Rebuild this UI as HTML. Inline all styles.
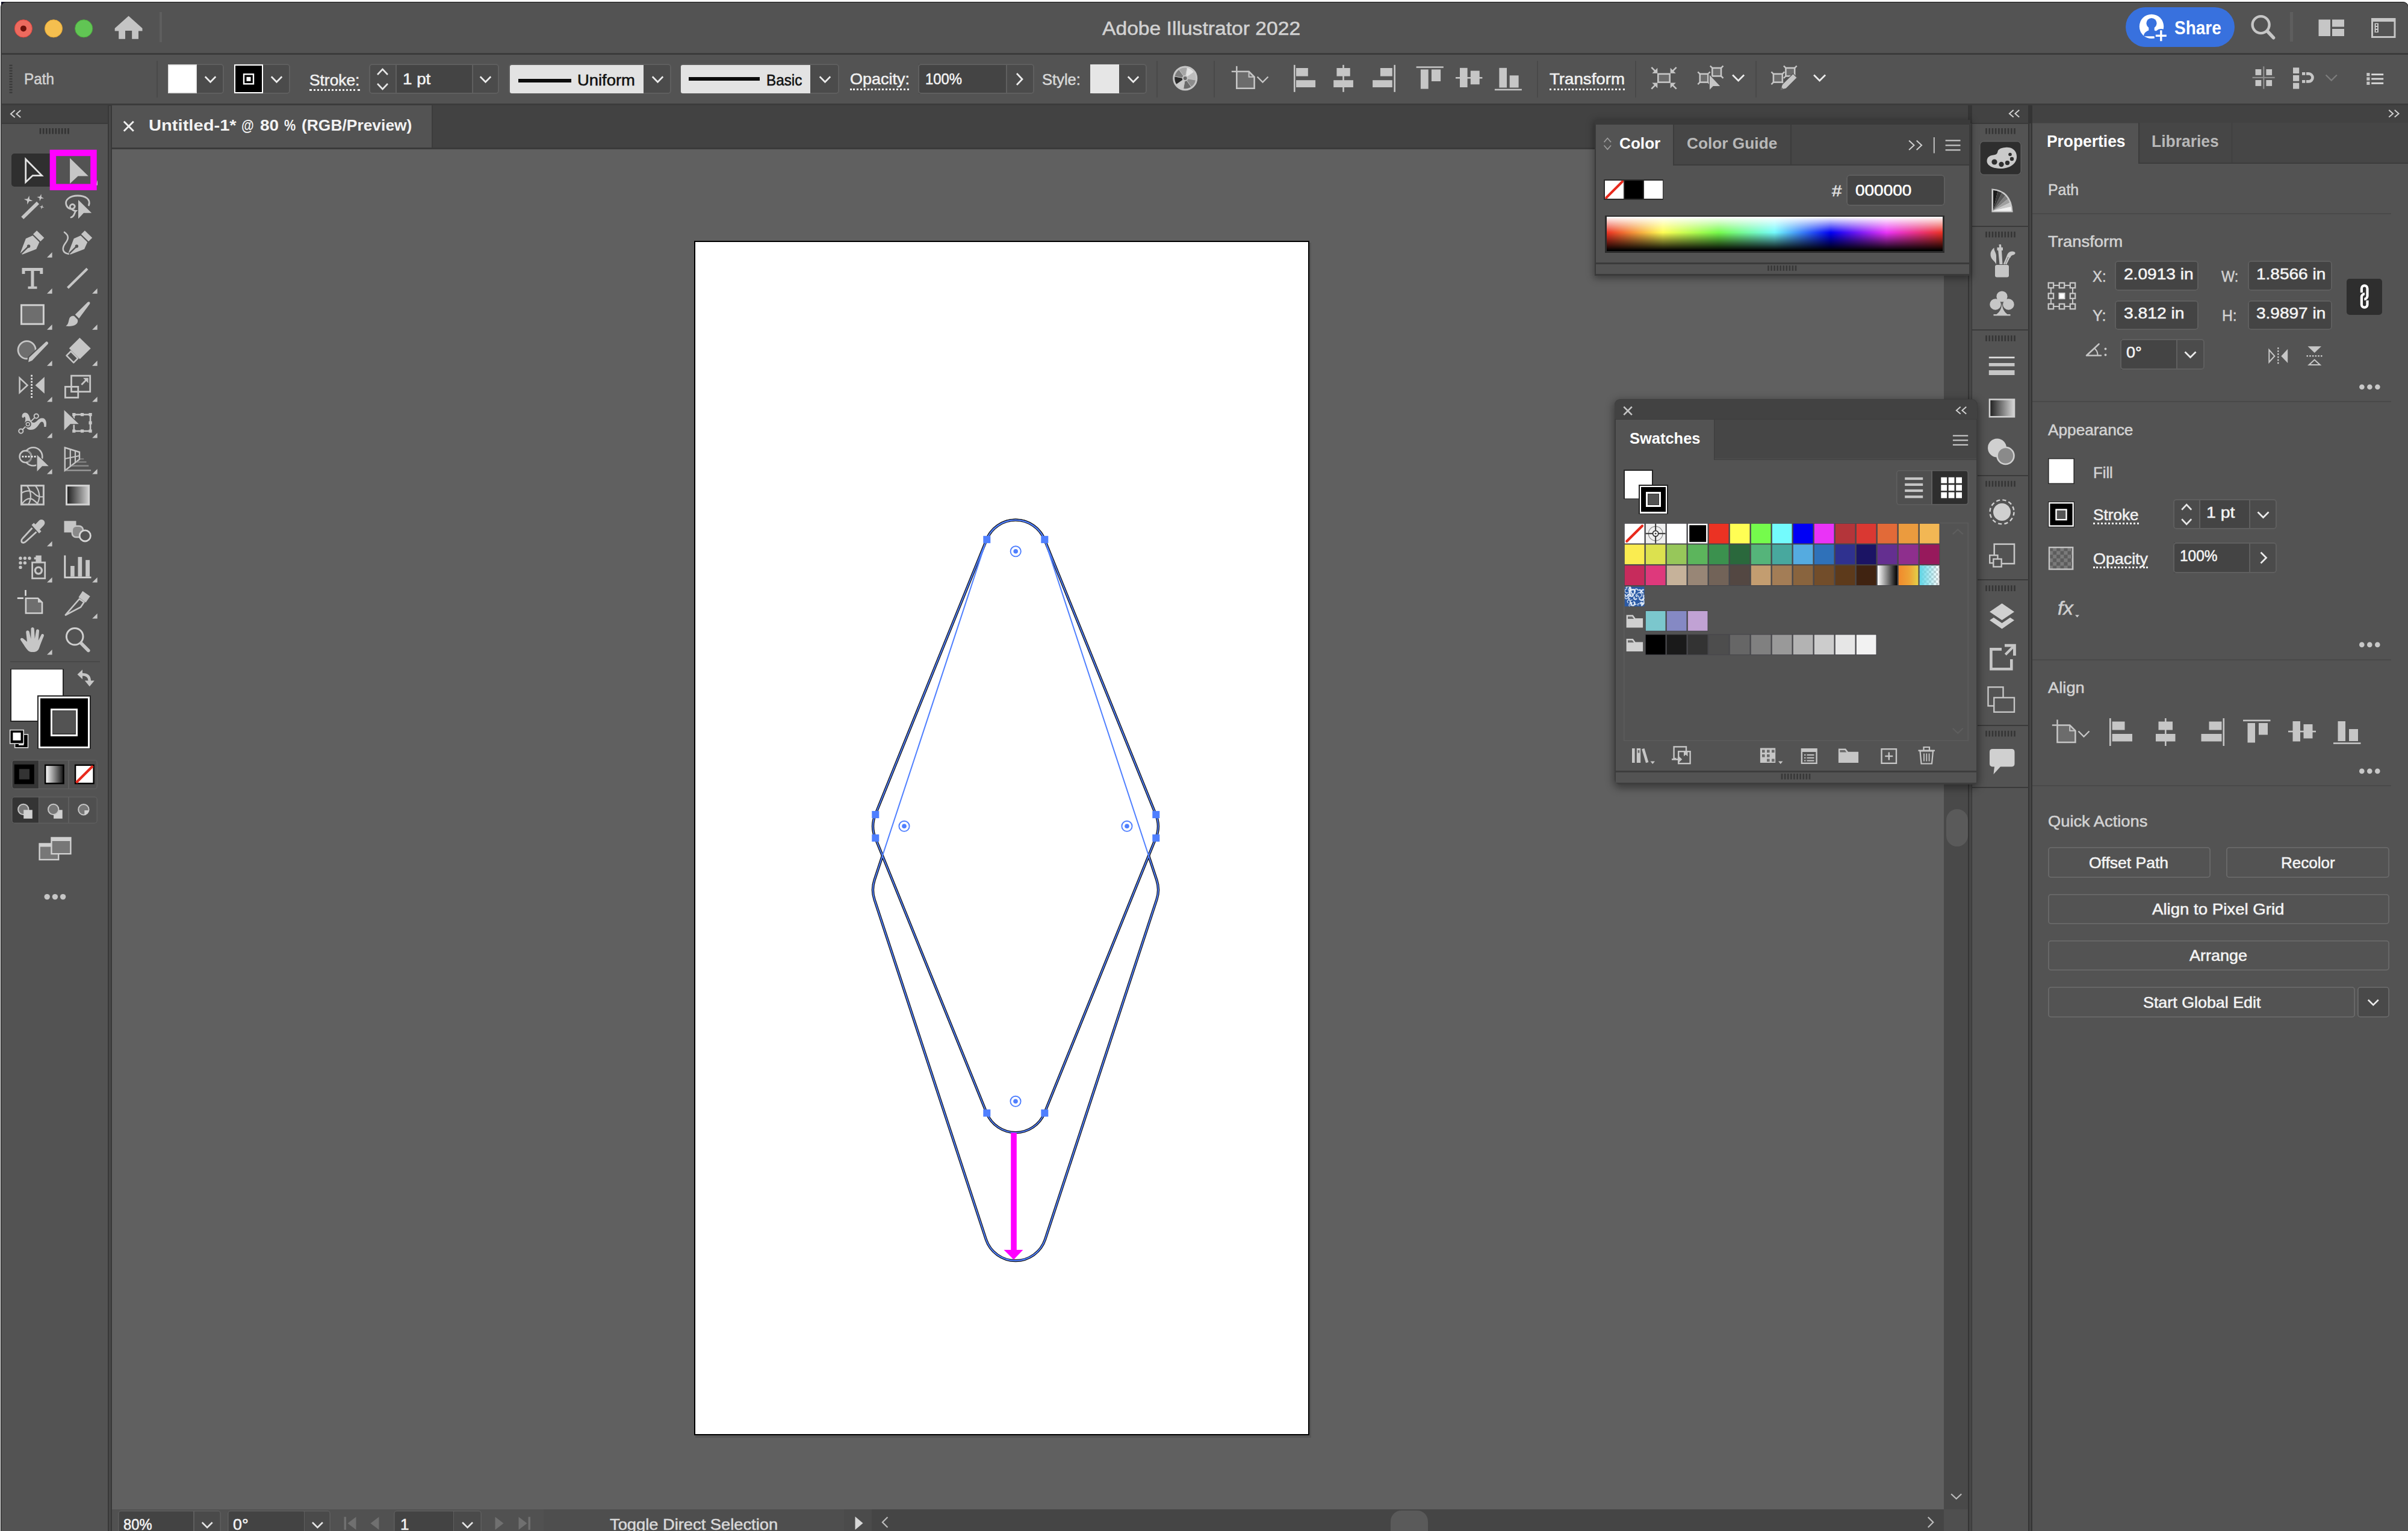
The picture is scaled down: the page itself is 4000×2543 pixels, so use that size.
<!DOCTYPE html>
<html><head><meta charset="utf-8"><title>Adobe Illustrator 2022</title>
<style>
html,body{margin:0;padding:0}
body{width:4000px;height:2543px;position:relative;overflow:hidden;background:#535353;font-family:"Liberation Sans",sans-serif}
#app div,#app span{position:absolute}
#app .t{white-space:nowrap;transform-origin:0 50%}
#ov{position:absolute;left:0;top:0}
</style></head><body>
<div id="app">
<div style="left:0px;top:0px;width:4000px;height:2543px;background:#ffffff;"></div>
<div style="left:1.75px;top:3px;width:12.25px;height:13px;background:#0d0b25;"></div>
<div style="left:1.3px;top:2.8px;width:3999.7px;height:2557.2px;background:#535353;border-radius:9px;border:1.8px solid #141414;box-sizing:border-box;"></div>
<div style="left:3px;top:88px;width:3997px;height:2.5px;background:#3b3b3b;"></div>
<div style="left:264.5px;top:19.5px;width:4px;height:50px;background:#5e5e5e;"></div>
<span class="t" style="left:1831.4px;top:30.91px;font-size:32px;line-height:32px;color:#d2d2d2;-webkit-text-stroke:0.55px #d2d2d2;transform:scaleX(1.0511);">Adobe Illustrator 2022</span>
<div style="left:3531.2px;top:12.3px;width:180.5px;height:65.8px;background:#3871de;border-radius:33px;"></div>
<span class="t" style="left:3612.4px;top:31.14px;font-size:31.5px;line-height:31.5px;color:#ffffff;font-weight:bold;transform:scaleX(0.8885);">Share</span>
<div style="left:3804.3px;top:20.4px;width:4.6px;height:48.9px;background:#5e5e5e;"></div>
<div style="left:3px;top:172px;width:3997px;height:2.5px;background:#3b3b3b;"></div>
<span class="t" style="left:40.2px;top:117.99px;font-size:26px;line-height:26px;color:#d0d0d0;-webkit-text-stroke:0.55px #d0d0d0;transform:scaleX(0.9346);">Path</span>
<div style="left:259.7px;top:101px;width:2px;height:60.5px;background:#494949;"></div>
<div style="left:278.7px;top:105.7px;width:93.3px;height:50.3px;background:#4b4b4b;border-radius:5px;"></div>
<div style="left:278.7px;top:105.7px;width:93.3px;height:50.3px;box-shadow:inset 0 0 0 2px #5f5f5f;border-radius:5px;"></div>
<div style="left:278.7px;top:107.4px;width:48.1px;height:47.9px;background:#ffffff;box-shadow:inset 0 0 0 1.5px #dcdcdc;"></div>
<div style="left:389px;top:105.7px;width:93px;height:50.3px;background:#4b4b4b;border-radius:5px;"></div>
<div style="left:389px;top:105.7px;width:93px;height:50.3px;box-shadow:inset 0 0 0 2px #5f5f5f;border-radius:5px;"></div>
<div style="left:389px;top:107.4px;width:48px;height:47.9px;background:#000000;box-shadow:inset 0 0 0 2px #ffffff;"></div>
<div style="left:514.2px;top:147.8px;width:83.4px;height:0;border-top:3px dotted #f0f0f0"></div>
<span class="t" style="left:514.2px;top:120.29px;font-size:26px;line-height:26px;color:#f0f0f0;-webkit-text-stroke:0.55px #f0f0f0;transform:scaleX(1.0124);">Stroke:</span>
<div style="left:613.4px;top:105.7px;width:215.6px;height:50.3px;background:#4b4b4b;border-radius:5px;"></div>
<div style="left:658.5px;top:105.7px;width:125px;height:50.3px;background:#444444;"></div>
<div style="left:656.5px;top:105.7px;width:2px;height:50.3px;background:#5f5f5f;"></div>
<div style="left:783.5px;top:105.7px;width:2px;height:50.3px;background:#5f5f5f;"></div>
<div style="left:613.4px;top:105.7px;width:215.6px;height:50.3px;box-shadow:inset 0 0 0 2px #5f5f5f;border-radius:5px;"></div>
<span class="t" style="left:668.7px;top:117.99px;font-size:26px;line-height:26px;color:#f2f2f2;-webkit-text-stroke:0.55px #f2f2f2;transform:scaleX(1.0674);">1 pt</span>
<div style="left:845px;top:105.7px;width:270px;height:50.3px;background:#4b4b4b;border-radius:5px;"></div>
<div style="left:845px;top:105.7px;width:270px;height:50.3px;box-shadow:inset 0 0 0 2px #5f5f5f;border-radius:5px;"></div>
<div style="left:846.6px;top:108px;width:222px;height:46.6px;background:#e3e3e3;border-radius:3px 0 0 3px;"></div>
<div style="left:861px;top:130.8px;width:87.5px;height:5.8px;background:#0c0c0c;"></div>
<span class="t" style="left:959.3px;top:120.39px;font-size:26px;line-height:26px;color:#111;-webkit-text-stroke:0.55px #111;transform:scaleX(1.0537);">Uniform</span>
<div style="left:1129.6px;top:105.7px;width:264.4px;height:50.3px;background:#4b4b4b;border-radius:5px;"></div>
<div style="left:1129.6px;top:105.7px;width:264.4px;height:50.3px;box-shadow:inset 0 0 0 2px #5f5f5f;border-radius:5px;"></div>
<div style="left:1131.2px;top:108px;width:214.8px;height:46.6px;background:#e3e3e3;border-radius:3px 0 0 3px;"></div>
<div style="left:1144px;top:128.4px;width:117.5px;height:6px;background:#0c0c0c;"></div>
<span class="t" style="left:1273.3px;top:120.39px;font-size:26px;line-height:26px;color:#111;-webkit-text-stroke:0.55px #111;transform:scaleX(0.9327);">Basic</span>
<div style="left:1411.6px;top:146.7px;width:98.9px;height:0;border-top:3px dotted #f0f0f0"></div>
<span class="t" style="left:1411.6px;top:118.49px;font-size:26px;line-height:26px;color:#f0f0f0;-webkit-text-stroke:0.55px #f0f0f0;transform:scaleX(1.0370);">Opacity:</span>
<div style="left:1525px;top:105.7px;width:192.5px;height:50.3px;background:#4b4b4b;border-radius:5px;"></div>
<div style="left:1526px;top:105.7px;width:145px;height:50.3px;background:#444444;"></div>
<div style="left:1671px;top:105.7px;width:2px;height:50.3px;background:#5f5f5f;"></div>
<div style="left:1525px;top:105.7px;width:192.5px;height:50.3px;box-shadow:inset 0 0 0 2px #5f5f5f;border-radius:5px;"></div>
<span class="t" style="left:1536.6px;top:117.99px;font-size:26px;line-height:26px;color:#f2f2f2;-webkit-text-stroke:0.55px #f2f2f2;transform:scaleX(0.9188);">100%</span>
<span class="t" style="left:1731.4px;top:119.49px;font-size:26px;line-height:26px;color:#d8d8d8;-webkit-text-stroke:0.55px #d8d8d8;transform:scaleX(0.9826);">Style:</span>
<div style="left:1811px;top:105.7px;width:94px;height:50.3px;background:#4b4b4b;border-radius:5px;"></div>
<div style="left:1811px;top:105.7px;width:94px;height:50.3px;box-shadow:inset 0 0 0 2px #5f5f5f;border-radius:5px;"></div>
<div style="left:1811px;top:107.4px;width:48.3px;height:47.9px;background:#e6e6e6;"></div>
<div style="left:1920.5px;top:101px;width:2px;height:60.5px;background:#494949;"></div>
<div style="left:2015.5px;top:101px;width:2px;height:60.5px;background:#494949;"></div>
<div style="left:2553px;top:101px;width:2px;height:60.5px;background:#494949;"></div>
<div style="left:2716px;top:101px;width:2px;height:60.5px;background:#494949;"></div>
<div style="left:2916px;top:101px;width:2px;height:60.5px;background:#494949;"></div>
<div style="left:2574.4px;top:146.7px;width:125px;height:0;border-top:3px dotted #f0f0f0"></div>
<span class="t" style="left:2574.4px;top:118.49px;font-size:26px;line-height:26px;color:#f0f0f0;-webkit-text-stroke:0.55px #f0f0f0;transform:scaleX(1.0638);">Transform</span>
<div style="left:2.5px;top:174.5px;width:177px;height:29.5px;background:#424242;"></div>
<div style="left:179.3px;top:174.5px;width:7px;height:2368.5px;background:#383838;"></div>
<div style="left:181.4px;top:176px;width:2.6px;height:2367px;background:#484848;"></div>
<div style="left:2.5px;top:204px;width:177px;height:1.5px;background:#3b3b3b;"></div>
<div style="left:19px;top:255px;width:71px;height:55px;background:#2f2f2f;border-radius:5px;"></div>
<div style="left:17px;top:1097.8px;width:149px;height:1.8px;background:#494949;"></div>
<div style="left:17.2px;top:1110.5px;width:88.9px;height:88.5px;background:#262626;"></div>
<div style="left:18.8px;top:1112px;width:85.6px;height:85.4px;background:#ffffff;"></div>
<div style="left:62px;top:1155.1px;width:89px;height:88.8px;background:#262626;"></div>
<div style="left:63.8px;top:1156.9px;width:85.7px;height:85.7px;background:#ffffff;"></div>
<div style="left:66.9px;top:1160px;width:79.4px;height:79.5px;background:#000000;"></div>
<div style="left:83.9px;top:1177px;width:45.4px;height:45.7px;background:#ffffff;"></div>
<div style="left:87px;top:1180.1px;width:39.2px;height:39.5px;background:#3a3a3a;"></div>
<div style="left:88.3px;top:1181.4px;width:36.6px;height:36.9px;background:#535353;"></div>
<div style="left:18.5px;top:1261.5px;width:143.8px;height:49.5px;background:#4f4f4f;border-radius:5px;"></div>
<div style="left:18.5px;top:1261.5px;width:45.9px;height:49.5px;background:#343434;border-radius:5px;border-top-right-radius:0;border-bottom-right-radius:0;"></div>
<div style="left:18.5px;top:1261.5px;width:143.8px;height:49.5px;box-shadow:inset 0 0 0 1.6px #5e5e5e;border-radius:5px;"></div>
<div style="left:63.6px;top:1262.5px;width:1.6px;height:47.5px;background:#5e5e5e;"></div>
<div style="left:113px;top:1262.5px;width:1.6px;height:47.5px;background:#5e5e5e;"></div>
<div style="left:18.5px;top:1323.2px;width:143.8px;height:44.8px;background:#4f4f4f;border-radius:5px;"></div>
<div style="left:18.5px;top:1323.2px;width:45.9px;height:44.8px;background:#343434;border-radius:5px;border-top-right-radius:0;border-bottom-right-radius:0;"></div>
<div style="left:18.5px;top:1323.2px;width:143.8px;height:44.8px;box-shadow:inset 0 0 0 1.6px #5e5e5e;border-radius:5px;"></div>
<div style="left:63.6px;top:1324.2px;width:1.6px;height:42.8px;background:#5e5e5e;"></div>
<div style="left:113px;top:1324.2px;width:1.6px;height:42.8px;background:#5e5e5e;"></div>
<div style="left:186.2px;top:174.5px;width:3089.8px;height:73.5px;background:#424242;"></div>
<div style="left:186.2px;top:175px;width:531.8px;height:70px;background:#535353;"></div>
<div style="left:717px;top:175px;width:1.6px;height:70px;background:#3c3c3c;"></div>
<div style="left:186.2px;top:245px;width:3089.8px;height:3px;background:#3a3a3a;"></div>
<span class="t" style="left:247.1px;top:194.97px;font-size:26.5px;line-height:26.5px;color:#f2f2f2;font-weight:bold;transform:scaleX(1.0996);">Untitled-1* </span>
<span class="t" style="left:400.8px;top:194.97px;font-size:26.5px;line-height:26.5px;color:#f2f2f2;font-weight:bold;transform:scaleX(0.8010);">@ </span>
<span class="t" style="left:431.5px;top:194.97px;font-size:26.5px;line-height:26.5px;color:#f2f2f2;font-weight:bold;transform:scaleX(1.0548);">80 </span>
<span class="t" style="left:472.1px;top:194.97px;font-size:26.5px;line-height:26.5px;color:#f2f2f2;font-weight:bold;transform:scaleX(0.8143);">% </span>
<span class="t" style="left:500.5px;top:194.97px;font-size:26.5px;line-height:26.5px;color:#f2f2f2;font-weight:bold;transform:scaleX(0.9963);">(RGB/Preview)</span>
<div style="left:186.2px;top:248px;width:3043.3px;height:2259px;background:#606060;"></div>
<div style="left:1155.2px;top:402.5px;width:1022.4px;height:1985.5px;background:#555555;"></div>
<div style="left:1152.7px;top:400px;width:1022.4px;height:1984.1px;background:#000000;"></div>
<div style="left:1155px;top:402.4px;width:1017.8px;height:1979.4px;background:#ffffff;"></div>
<div style="left:3229.3px;top:248px;width:39.7px;height:2259px;background:#494949;"></div>
<div style="left:3232.5px;top:1344px;width:36px;height:62px;background:#5a5a5a;border-radius:18px;"></div>
<div style="left:3269px;top:174.5px;width:7.5px;height:2368.5px;background:#353535;"></div>
<div style="left:3271.3px;top:205px;width:3.5px;height:2338px;background:#464646;"></div>
<div style="left:186.2px;top:2507px;width:3082.8px;height:36px;background:#454545;"></div>
<div style="left:186.2px;top:2507px;width:716.8px;height:36px;background:#515151;"></div>
<div style="left:903px;top:2507px;width:499px;height:36px;background:#4e4e4e;"></div>
<div style="left:1402px;top:2507px;width:46px;height:36px;background:#4b4b4b;"></div>
<div style="left:3229.3px;top:2507px;width:39.7px;height:36px;background:#4f4f4f;"></div>
<div style="left:195.9px;top:2509.2px;width:170.7px;height:50.8px;background:#4a4a4a;border-radius:5px;"></div>
<div style="left:195.9px;top:2509.2px;width:125.9px;height:50.8px;background:#434343;border-radius:5px;"></div>
<div style="left:321px;top:2510px;width:1.6px;height:33px;background:#5e5e5e;"></div>
<div style="left:195.9px;top:2509.2px;width:170.7px;height:50.8px;box-shadow:inset 0 0 0 1.6px #5e5e5e;border-radius:5px;"></div>
<div style="left:378.3px;top:2509.2px;width:171.1px;height:50.8px;background:#4a4a4a;border-radius:5px;"></div>
<div style="left:378.3px;top:2509.2px;width:127.2px;height:50.8px;background:#434343;border-radius:5px;"></div>
<div style="left:504.7px;top:2510px;width:1.6px;height:33px;background:#5e5e5e;"></div>
<div style="left:378.3px;top:2509.2px;width:171.1px;height:50.8px;box-shadow:inset 0 0 0 1.6px #5e5e5e;border-radius:5px;"></div>
<div style="left:654px;top:2509.2px;width:145.5px;height:50.8px;background:#4a4a4a;border-radius:5px;"></div>
<div style="left:654px;top:2509.2px;width:99.7px;height:50.8px;background:#434343;border-radius:5px;"></div>
<div style="left:752.9px;top:2510px;width:1.6px;height:33px;background:#5e5e5e;"></div>
<div style="left:654px;top:2509.2px;width:145.5px;height:50.8px;box-shadow:inset 0 0 0 1.6px #5e5e5e;border-radius:5px;"></div>
<span class="t" style="left:204.9px;top:2519.29px;font-size:26px;line-height:26px;color:#f2f2f2;-webkit-text-stroke:0.55px #f2f2f2;transform:scaleX(0.9126);">80%</span>
<span class="t" style="left:386.9px;top:2519.29px;font-size:26px;line-height:26px;color:#f2f2f2;-webkit-text-stroke:0.55px #f2f2f2;transform:scaleX(1.0298);">0°</span>
<span class="t" style="left:665px;top:2519.29px;font-size:26px;line-height:26px;color:#f2f2f2;-webkit-text-stroke:0.55px #f2f2f2;">1</span>
<span class="t" style="left:1013.3px;top:2519.29px;font-size:26px;line-height:26px;color:#d8d8d8;-webkit-text-stroke:0.55px #d8d8d8;transform:scaleX(1.0496);">Toggle Direct Selection</span>
<div style="left:2309.5px;top:2508.8px;width:62.5px;height:51.2px;background:#5a5a5a;border-radius:18px;"></div>
<div style="left:3276.3px;top:174.5px;width:723.7px;height:29.5px;background:#424242;"></div>
<div style="left:3276.3px;top:204px;width:93.7px;height:2339px;background:#535353;"></div>
<div style="left:3369.3px;top:174.5px;width:7.1px;height:2368.5px;background:#343434;"></div>
<div style="left:3371.4px;top:205px;width:2.9px;height:2338px;background:#454545;"></div>
<div style="left:3376.4px;top:205px;width:1.1px;height:2338px;background:#595959;"></div>
<div style="left:3376px;top:204px;width:624px;height:2339px;background:#535353;"></div>
<div style="left:3276.3px;top:374.5px;width:93.7px;height:2.4px;background:#3a3a3a;"></div>
<div style="left:3276.3px;top:547px;width:93.7px;height:2.4px;background:#3a3a3a;"></div>
<div style="left:3276.3px;top:788.6px;width:93.7px;height:2.4px;background:#3a3a3a;"></div>
<div style="left:3276.3px;top:962.1px;width:93.7px;height:2.4px;background:#3a3a3a;"></div>
<div style="left:3276.3px;top:1203.6px;width:93.7px;height:2.4px;background:#3a3a3a;"></div>
<div style="left:3276.3px;top:1306.8px;width:93.7px;height:2.4px;background:#3a3a3a;"></div>
<div style="left:3276.3px;top:204px;width:93.7px;height:1.5px;background:#3a3a3a;"></div>
<div style="left:3287.5px;top:233.7px;width:70.5px;height:57.7px;background:#2e2e2e;border-radius:7px;"></div>
<div style="left:3287.5px;top:233.7px;width:70.5px;height:57.7px;box-shadow:inset 0 0 0 1.6px #5f5f5f;border-radius:7px;"></div>
<div style="left:3552.2px;top:204px;width:447.8px;height:66.4px;background:#464646;"></div>
<div style="left:3552.2px;top:270.4px;width:447.8px;height:2px;background:#3c3c3c;"></div>
<div style="left:3552.2px;top:204px;width:1.8px;height:68px;background:#3c3c3c;"></div>
<div style="left:3706.5px;top:204px;width:1.8px;height:66.4px;background:#3c3c3c;"></div>
<div style="left:3376px;top:204px;width:176.2px;height:1.4px;background:#484848;"></div>
<span class="t" style="left:3399.8px;top:222.44px;font-size:27px;line-height:27px;color:#ffffff;font-weight:bold;transform:scaleX(0.9771);">Properties</span>
<span class="t" style="left:3574.4px;top:222.44px;font-size:27px;line-height:27px;color:#b8b8b8;font-weight:bold;transform:scaleX(0.9802);">Libraries</span>
<span class="t" style="left:3401.6px;top:301.57px;font-size:26.5px;line-height:26.5px;color:#d2d2d2;-webkit-text-stroke:0.55px #d2d2d2;transform:scaleX(0.9373);">Path</span>
<div style="left:3376px;top:353.6px;width:595.8px;height:2px;background:#494949;"></div>
<div style="left:3376px;top:666px;width:595.8px;height:2px;background:#494949;"></div>
<div style="left:3376px;top:1095.2px;width:595.8px;height:2px;background:#494949;"></div>
<div style="left:3376px;top:1304.2px;width:595.8px;height:2px;background:#494949;"></div>
<span class="t" style="left:3401.6px;top:387.97px;font-size:26.5px;line-height:26.5px;color:#d2d2d2;-webkit-text-stroke:0.55px #d2d2d2;transform:scaleX(1.0362);">Transform</span>
<span class="t" style="left:3475.7px;top:446.07px;font-size:26.5px;line-height:26.5px;color:#d2d2d2;-webkit-text-stroke:0.55px #d2d2d2;transform:scaleX(0.8983);">X:</span>
<span class="t" style="left:3689.7px;top:446.07px;font-size:26.5px;line-height:26.5px;color:#d2d2d2;-webkit-text-stroke:0.55px #d2d2d2;transform:scaleX(0.8838);">W:</span>
<span class="t" style="left:3475.7px;top:510.57px;font-size:26.5px;line-height:26.5px;color:#d2d2d2;-webkit-text-stroke:0.55px #d2d2d2;transform:scaleX(0.9543);">Y:</span>
<span class="t" style="left:3690.7px;top:510.57px;font-size:26.5px;line-height:26.5px;color:#d2d2d2;-webkit-text-stroke:0.55px #d2d2d2;transform:scaleX(0.9321);">H:</span>
<div style="left:3512.9px;top:433.3px;width:139.5px;height:49.8px;background:#444444;box-shadow:inset 0 0 0 2px #5e5e5e;border-radius:5px;"></div>
<div style="left:3734px;top:433.3px;width:139.5px;height:49.8px;background:#444444;box-shadow:inset 0 0 0 2px #5e5e5e;border-radius:5px;"></div>
<div style="left:3512.9px;top:498.5px;width:139.5px;height:49.8px;background:#444444;box-shadow:inset 0 0 0 2px #5e5e5e;border-radius:5px;"></div>
<div style="left:3734px;top:498.5px;width:139.5px;height:49.8px;background:#444444;box-shadow:inset 0 0 0 2px #5e5e5e;border-radius:5px;"></div>
<span class="t" style="left:3527.5px;top:441.87px;font-size:26.5px;line-height:26.5px;color:#f4f4f4;-webkit-text-stroke:0.55px #f4f4f4;transform:scaleX(1.0601);">2.0913 in</span>
<span class="t" style="left:3747.9px;top:441.87px;font-size:26.5px;line-height:26.5px;color:#f4f4f4;-webkit-text-stroke:0.55px #f4f4f4;transform:scaleX(1.0573);">1.8566 in</span>
<span class="t" style="left:3527.5px;top:507.07px;font-size:26.5px;line-height:26.5px;color:#f4f4f4;-webkit-text-stroke:0.55px #f4f4f4;transform:scaleX(1.0656);">3.812 in</span>
<span class="t" style="left:3747.9px;top:507.07px;font-size:26.5px;line-height:26.5px;color:#f4f4f4;-webkit-text-stroke:0.55px #f4f4f4;transform:scaleX(1.0573);">3.9897 in</span>
<div style="left:3897.7px;top:462.5px;width:59.3px;height:60px;background:#2e2e2e;border-radius:5px;"></div>
<div style="left:3521.6px;top:563.2px;width:140px;height:50.6px;background:#4b4b4b;border-radius:5px;"></div>
<div style="left:3523px;top:563.2px;width:92px;height:50.6px;background:#444444;"></div>
<div style="left:3615px;top:563.2px;width:2px;height:50.6px;background:#5f5f5f;"></div>
<div style="left:3521.6px;top:563.2px;width:140px;height:50.6px;box-shadow:inset 0 0 0 2px #5f5f5f;border-radius:5px;"></div>
<span class="t" style="left:3531.7px;top:571.97px;font-size:26.5px;line-height:26.5px;color:#f4f4f4;-webkit-text-stroke:0.55px #f4f4f4;transform:scaleX(1.0180);">0°</span>
<span class="t" style="left:3401.8px;top:700.97px;font-size:26.5px;line-height:26.5px;color:#d2d2d2;-webkit-text-stroke:0.55px #d2d2d2;transform:scaleX(0.9894);">Appearance</span>
<div style="left:3401.8px;top:761.3px;width:44.4px;height:43.1px;background:#ffffff;box-shadow:inset 0 0 0 1.6px #2a2a2a;"></div>
<span class="t" style="left:3477.2px;top:772.47px;font-size:26.5px;line-height:26.5px;color:#d2d2d2;-webkit-text-stroke:0.55px #d2d2d2;transform:scaleX(0.9687);">Fill</span>
<div style="left:3401.8px;top:833.3px;width:44.4px;height:43.1px;background:#000000;box-shadow:inset 0 0 0 1.2px #222,inset 0 0 0 3.4px #fff;"></div>
<div style="left:3477.2px;top:868.3px;width:75.5px;height:0;border-top:3px dotted #f0f0f0"></div>
<span class="t" style="left:3477.2px;top:842.27px;font-size:26.5px;line-height:26.5px;color:#f0f0f0;-webkit-text-stroke:0.55px #f0f0f0;transform:scaleX(0.9857);">Stroke</span>
<div style="left:3610px;top:829px;width:172.4px;height:50px;background:#4b4b4b;border-radius:5px;"></div>
<div style="left:3655.4px;top:829px;width:80.7px;height:50px;background:#444444;"></div>
<div style="left:3653.4px;top:829px;width:2px;height:50px;background:#5f5f5f;"></div>
<div style="left:3736.1px;top:829px;width:2px;height:50px;background:#5f5f5f;"></div>
<div style="left:3610px;top:829px;width:172.4px;height:50px;box-shadow:inset 0 0 0 2px #5f5f5f;border-radius:5px;"></div>
<span class="t" style="left:3665.2px;top:837.97px;font-size:26.5px;line-height:26.5px;color:#f4f4f4;-webkit-text-stroke:0.55px #f4f4f4;transform:scaleX(1.0723);">1 pt</span>
<div style="left:3477.2px;top:940.7px;width:91px;height:0;border-top:3px dotted #f0f0f0"></div>
<span class="t" style="left:3477.2px;top:914.67px;font-size:26.5px;line-height:26.5px;color:#f0f0f0;-webkit-text-stroke:0.55px #f0f0f0;transform:scaleX(1.0129);">Opacity</span>
<div style="left:3610px;top:901.4px;width:172.4px;height:50.4px;background:#4b4b4b;border-radius:5px;"></div>
<div style="left:3611px;top:901.4px;width:125.1px;height:50.4px;background:#444444;"></div>
<div style="left:3736.1px;top:901.4px;width:2px;height:50.4px;background:#5f5f5f;"></div>
<div style="left:3610px;top:901.4px;width:172.4px;height:50.4px;box-shadow:inset 0 0 0 2px #5f5f5f;border-radius:5px;"></div>
<span class="t" style="left:3620.8px;top:909.97px;font-size:26.5px;line-height:26.5px;color:#f4f4f4;-webkit-text-stroke:0.55px #f4f4f4;transform:scaleX(0.9221);">100%</span>
<span class="t" style="left:3418.2px;top:994.96px;font-size:31px;line-height:31px;color:#cfcfcf;-webkit-text-stroke:0.55px #cfcfcf;font-style:italic;transform:scaleX(1.0694);">fx</span>
<span class="t" style="left:3401.8px;top:1128.97px;font-size:26.5px;line-height:26.5px;color:#d2d2d2;-webkit-text-stroke:0.55px #d2d2d2;transform:scaleX(1.0316);">Align</span>
<span class="t" style="left:3401.7px;top:1350.67px;font-size:26.5px;line-height:26.5px;color:#d2d2d2;-webkit-text-stroke:0.55px #d2d2d2;transform:scaleX(1.0296);">Quick Actions</span>
<div style="left:3401.7px;top:1407px;width:270.3px;height:50.8px;box-shadow:inset 0 0 0 1.8px #6a6a6a;border-radius:5px;"></div>
<div style="left:3698px;top:1407px;width:271px;height:50.8px;box-shadow:inset 0 0 0 1.8px #6a6a6a;border-radius:5px;"></div>
<div style="left:3401.7px;top:1484.5px;width:567.3px;height:50.5px;box-shadow:inset 0 0 0 1.8px #6a6a6a;border-radius:5px;"></div>
<div style="left:3401.7px;top:1561.6px;width:567.3px;height:50.8px;box-shadow:inset 0 0 0 1.8px #6a6a6a;border-radius:5px;"></div>
<div style="left:3401.7px;top:1639px;width:510.8px;height:51.2px;box-shadow:inset 0 0 0 1.8px #6a6a6a;border-radius:5px;"></div>
<div style="left:3915.7px;top:1639px;width:53.3px;height:51.2px;background:#494949;box-shadow:inset 0 0 0 1.8px #6a6a6a;border-radius:5px;"></div>
<span class="t" style="left:3470.4px;top:1419.97px;font-size:26.5px;line-height:26.5px;color:#f4f4f4;-webkit-text-stroke:0.55px #f4f4f4;transform:scaleX(0.9993);">Offset Path</span>
<span class="t" style="left:3788.7px;top:1419.97px;font-size:26.5px;line-height:26.5px;color:#f4f4f4;-webkit-text-stroke:0.55px #f4f4f4;transform:scaleX(0.9811);">Recolor</span>
<span class="t" style="left:3574.8px;top:1497.47px;font-size:26.5px;line-height:26.5px;color:#f4f4f4;-webkit-text-stroke:0.55px #f4f4f4;transform:scaleX(1.0421);">Align to Pixel Grid</span>
<span class="t" style="left:3636.6px;top:1574.27px;font-size:26.5px;line-height:26.5px;color:#f4f4f4;-webkit-text-stroke:0.55px #f4f4f4;transform:scaleX(1.0172);">Arrange</span>
<span class="t" style="left:3559.7px;top:1651.77px;font-size:26.5px;line-height:26.5px;color:#f4f4f4;-webkit-text-stroke:0.55px #f4f4f4;transform:scaleX(1.0127);">Start Global Edit</span>
<div style="left:2649px;top:198.5px;width:623.5px;height:259px;background:#3a3a3a;box-shadow:0 3px 12px 1px rgba(0,0,0,0.4);"></div>
<div style="left:2651.4px;top:207.4px;width:620.1px;height:228.6px;background:#535353;"></div>
<div style="left:2779.2px;top:207.4px;width:492.3px;height:65.2px;background:#464646;"></div>
<div style="left:2779.2px;top:272.6px;width:492.3px;height:2px;background:#3c3c3c;"></div>
<div style="left:2779.2px;top:207.4px;width:1.8px;height:66.6px;background:#3c3c3c;"></div>
<div style="left:2973.8px;top:207.4px;width:1.8px;height:65.2px;background:#3c3c3c;"></div>
<span class="t" style="left:2689.5px;top:224.99px;font-size:26px;line-height:26px;color:#ffffff;font-weight:bold;transform:scaleX(1.0060);">Color</span>
<span class="t" style="left:2801.9px;top:224.99px;font-size:26px;line-height:26px;color:#b8b8b8;font-weight:bold;transform:scaleX(1.0102);">Color Guide</span>
<div style="left:2664.4px;top:297.9px;width:99.1px;height:34.4px;background:#2b2b2b;"></div>
<div style="left:2666.3px;top:299.8px;width:30.5px;height:30.5px;background:#ffffff;"></div>
<div style="left:2698.8px;top:299.8px;width:30.6px;height:30.5px;background:#000000;"></div>
<div style="left:2731.4px;top:299.8px;width:30.5px;height:30.5px;background:#ffffff;"></div>
<span class="t" style="left:3042.7px;top:304.39px;font-size:26px;line-height:26px;color:#e0e0e0;-webkit-text-stroke:0.55px #e0e0e0;transform:scaleX(1.1266);">#</span>
<div style="left:3066.6px;top:290.4px;width:164.6px;height:51.8px;background:#444444;box-shadow:inset 0 0 0 2px #5e5e5e;border-radius:6px;"></div>
<span class="t" style="left:3082.3px;top:303.39px;font-size:26px;line-height:26px;color:#ffffff;-webkit-text-stroke:0.55px #ffffff;transform:scaleX(1.0753);">000000</span>
<div style="left:2666.3px;top:357.5px;width:563.3px;height:62.2px;background:#2b2b2b;"></div>
<div style="left:2668.6px;top:359.8px;width:558.8px;height:57.6px;background:linear-gradient(to bottom,#fff 0%,rgba(255,255,255,0) 46%,rgba(0,0,0,0) 46%,#000 98%),linear-gradient(to right,#eb3223 0%,#fffe54 16.7%,#75fb4c 33.3%,#73fbfd 50%,#0000f5 66.7%,#ea33f7 83.3%,#eb3223 100%);"></div>
<div style="left:2651.4px;top:436px;width:620.1px;height:3.2px;background:#3a3a3a;"></div>
<div style="left:2651.4px;top:439.2px;width:620.1px;height:16.1px;background:#535353;"></div>
<div style="left:2681.7px;top:663px;width:602.9px;height:639.5px;background:#3d3d3d;border-radius:9px;box-shadow:0 4px 14px 2px rgba(0,0,0,0.4);"></div>
<div style="left:2682.3px;top:663.6px;width:601.7px;height:32.6px;background:#424242;border-radius:8.5px 8.5px 0 0;"></div>
<div style="left:2683.7px;top:697.4px;width:598.9px;height:582.9px;background:#535353;"></div>
<div style="left:2846.7px;top:697.4px;width:435.9px;height:65.1px;background:#464646;"></div>
<div style="left:2846.7px;top:762.5px;width:435.9px;height:1.6px;background:#3c3c3c;"></div>
<div style="left:2846.7px;top:697.4px;width:1.6px;height:66.1px;background:#3c3c3c;"></div>
<div style="left:2683.7px;top:1283.4px;width:598.9px;height:17px;background:#535353;"></div>
<span class="t" style="left:2706.8px;top:715.09px;font-size:26px;line-height:26px;color:#ffffff;font-weight:bold;transform:scaleX(0.9795);">Swatches</span>
<div style="left:2697px;top:780.3px;width:49.1px;height:49.1px;background:#262626;"></div>
<div style="left:2698.7px;top:782px;width:45.7px;height:45.7px;background:#ffffff;"></div>
<div style="left:2721.9px;top:805px;width:49.3px;height:49.4px;background:#262626;"></div>
<div style="left:2723.7px;top:806.8px;width:45.7px;height:45.8px;background:#ffffff;"></div>
<div style="left:2726.3px;top:809.4px;width:40.5px;height:40.6px;background:#000000;"></div>
<div style="left:2733.8px;top:817.1px;width:25.4px;height:25.2px;background:#ffffff;"></div>
<div style="left:2736.6px;top:819.9px;width:19.8px;height:19.6px;background:#535353;box-shadow:inset 0 0 0 1px #3a3a3a;"></div>
<div style="left:3149.8px;top:780.9px;width:120.7px;height:57.9px;background:#4f4f4f;border-radius:5px;"></div>
<div style="left:3209.6px;top:782.4px;width:59.4px;height:54.9px;background:#2e2e2e;border-radius:0 4px 4px 0;"></div>
<div style="left:3149.8px;top:780.9px;width:120.7px;height:57.9px;box-shadow:inset 0 0 0 1.6px #5f5f5f;border-radius:5px;"></div>
<div style="left:3208px;top:782px;width:1.6px;height:55.7px;background:#5f5f5f;"></div>
<div style="left:2697.2px;top:868px;width:573.3px;height:363px;box-shadow:inset 0 0 0 1.5px #5c5c5c;"></div>
</div>
<svg id="ov" width="4000" height="2543" viewBox="0 0 4000 2543">
<circle cx="38.9" cy="47.4" r="14.6" fill="#ed6a5e" stroke="#e0443e" stroke-width="1"/>
<circle cx="89" cy="47.4" r="14.6" fill="#f5bf4f" stroke="#dea133" stroke-width="1"/>
<circle cx="139.2" cy="47.4" r="14.6" fill="#61c554" stroke="#4aa73c" stroke-width="1"/>
<circle cx="38.9" cy="47.4" r="5" fill="#6c110a"/>
<path d="M213.6 26.5 L236.5 47 L236.5 51.5 L230 51.5 L230 64.7 L219.2 64.7 L219.2 51 L208 51 L208 64.7 L197.2 64.7 L197.2 51.5 L190.7 51.5 L190.7 47 Z" fill="#c4c4c4"/>
<circle cx="3574" cy="43.9" r="20.2" fill="#ffffff"/>
<clipPath id="pcl"><circle cx="3574" cy="43.9" r="20.2"/></clipPath>
<circle cx="3574" cy="38.6" r="8.6" fill="#3871de"/>
<path d="M3561 60.2 C3561 54.5 3565.5 52 3569.3 50.6 L3569.3 45 L3578.7 45 L3578.7 50.6 C3582.5 52 3587 54.5 3587 60.2 Z" fill="#3871de" clip-path="url(#pcl)"/>
<circle cx="3590" cy="59.5" r="11.5" fill="#3871de"/>
<line x1="3589.8" y1="50.3" x2="3589.8" y2="68.3" stroke="#fff" stroke-width="3.4"/>
<line x1="3580.8" y1="59.3" x2="3598.8" y2="59.3" stroke="#fff" stroke-width="3.4"/>
<circle cx="3755.6" cy="41.1" r="14" fill="none" stroke="#c6c6c6" stroke-width="4.4"/>
<line x1="3766" y1="51.5" x2="3776.5" y2="62.7" stroke="#c6c6c6" stroke-width="5.6" stroke-linecap="round"/>
<rect x="3851.5" y="32.5" width="19.5" height="27.5" fill="#c6c6c6"/>
<rect x="3874" y="32.5" width="20" height="12" fill="#c6c6c6"/>
<rect x="3874" y="48" width="20" height="12" fill="#c6c6c6"/>
<rect x="3940.5" y="31.5" width="37.5" height="30" fill="none" stroke="#c6c6c6" stroke-width="3"/>
<rect x="3940.5" y="31.5" width="37.5" height="4.5" fill="#c6c6c6"/>
<rect x="3944.5" y="38.5" width="6.5" height="15.5" fill="#c6c6c6"/>
<circle cx="3947.8" cy="41.5" r="1.2" fill="#222"/>
<circle cx="3947.8" cy="46.3" r="1.2" fill="#222"/>
<circle cx="3947.8" cy="51.2" r="1.2" fill="#222"/>
<rect x="15.5" y="107.5" width="5" height="2.3" fill="#3a3a3a"/>
<rect x="15.5" y="112" width="5" height="2.3" fill="#3a3a3a"/>
<rect x="15.5" y="116.5" width="5" height="2.3" fill="#3a3a3a"/>
<rect x="15.5" y="121" width="5" height="2.3" fill="#3a3a3a"/>
<rect x="15.5" y="125.5" width="5" height="2.3" fill="#3a3a3a"/>
<rect x="15.5" y="130" width="5" height="2.3" fill="#3a3a3a"/>
<rect x="15.5" y="134.5" width="5" height="2.3" fill="#3a3a3a"/>
<rect x="15.5" y="139" width="5" height="2.3" fill="#3a3a3a"/>
<rect x="15.5" y="143.5" width="5" height="2.3" fill="#3a3a3a"/>
<rect x="15.5" y="148" width="5" height="2.3" fill="#3a3a3a"/>
<rect x="15.5" y="152.5" width="5" height="2.3" fill="#3a3a3a"/>
<path d="M340.75 127.3 L349.5 136.3 L358.25 127.3" fill="none" stroke="#ececec" stroke-width="2.7"/>
<rect x="405" y="123.3" width="16" height="16" fill="none" stroke="#fff" stroke-width="2.4"/>
<rect x="409.5" y="127.8" width="7" height="7" fill="#fff"/>
<path d="M450.75 127.3 L459.5 136.3 L468.25 127.3" fill="none" stroke="#ececec" stroke-width="2.7"/>
<path d="M627 124 L635.5 115 L644 124" fill="none" stroke="#e6e6e6" stroke-width="2.6"/>
<path d="M627 139 L635.5 148 L644 139" fill="none" stroke="#e6e6e6" stroke-width="2.6"/>
<path d="M797.75 127.3 L806.5 136.3 L815.25 127.3" fill="none" stroke="#ececec" stroke-width="2.7"/>
<path d="M1083.75 127.3 L1092.5 136.3 L1101.25 127.3" fill="none" stroke="#ececec" stroke-width="2.7"/>
<path d="M1361.75 127.3 L1370.5 136.3 L1379.25 127.3" fill="none" stroke="#ececec" stroke-width="2.7"/>
<path d="M1689 122 L1698 131.5 L1689 141" fill="none" stroke="#ececec" stroke-width="2.8"/>
<path d="M1873.75 127.3 L1882.5 136.3 L1891.25 127.3" fill="none" stroke="#ececec" stroke-width="2.7"/>
<path d="M1968.7 130 L1971.91 111.78 A18.5 18.5 0 0 1 1983.85 119.39 Z" fill="#e2e2e2" stroke="#c6c6c6" stroke-width="0.8"/>
<path d="M1968.7 130 L1983.85 119.39 A18.5 18.5 0 0 1 1986.92 133.21 Z" fill="#bdbdbd" stroke="#c6c6c6" stroke-width="0.8"/>
<path d="M1968.7 130 L1986.92 133.21 A18.5 18.5 0 0 1 1979.31 145.15 Z" fill="#8c8c8c" stroke="#c6c6c6" stroke-width="0.8"/>
<path d="M1968.7 130 L1979.31 145.15 A18.5 18.5 0 0 1 1965.49 148.22 Z" fill="#6a6a6a" stroke="#c6c6c6" stroke-width="0.8"/>
<path d="M1968.7 130 L1965.49 148.22 A18.5 18.5 0 0 1 1953.55 140.61 Z" fill="#c9c9c9" stroke="#c6c6c6" stroke-width="0.8"/>
<path d="M1968.7 130 L1953.55 140.61 A18.5 18.5 0 0 1 1950.48 126.79 Z" fill="#2a2a2a" stroke="#c6c6c6" stroke-width="0.8"/>
<path d="M1968.7 130 L1950.48 126.79 A18.5 18.5 0 0 1 1958.09 114.85 Z" fill="#7b7b7b" stroke="#c6c6c6" stroke-width="0.8"/>
<path d="M1968.7 130 L1958.09 114.85 A18.5 18.5 0 0 1 1971.91 111.78 Z" fill="#a5a5a5" stroke="#c6c6c6" stroke-width="0.8"/>
<circle cx="1968.7" cy="130" r="19" fill="none" stroke="#c6c6c6" stroke-width="3"/>
<circle cx="1968.7" cy="130" r="4" fill="#6a6a6a" stroke="#c6c6c6" stroke-width="2"/>
<path d="M2054.3 118.8 L2074.6 118.8 L2083.6 127.8 L2083.6 146.8 L2054.3 146.8 Z" fill="#6c6c6c" stroke="#c6c6c6" stroke-width="2.6"/>
<path d="M2074.6 118.8 L2074.6 127.8 L2083.6 127.8" fill="none" stroke="#c6c6c6" stroke-width="2"/>
<line x1="2054.3" y1="109.8" x2="2054.3" y2="117.8" stroke="#c6c6c6" stroke-width="2.4"/>
<line x1="2045.8" y1="118.8" x2="2053.3" y2="118.8" stroke="#c6c6c6" stroke-width="2.4"/>
<path d="M2088.5 127.5 L2097.5 136.5 L2106.5 127.5" fill="none" stroke="#c6c6c6" stroke-width="2.4"/>
<rect x="2149" y="107.8" width="2.6" height="45" fill="#c6c6c6"/>
<rect x="2153" y="113" width="19.8" height="13.6" fill="#c6c6c6"/>
<rect x="2153" y="133.2" width="32.1" height="11.8" fill="#c6c6c6"/>
<rect x="2230.2" y="107.8" width="2.6" height="45" fill="#c6c6c6"/>
<rect x="2220.4" y="113" width="22.3" height="13.6" fill="#c6c6c6"/>
<rect x="2215.2" y="133.2" width="32.7" height="11.8" fill="#c6c6c6"/>
<rect x="2315.4" y="107.8" width="2.6" height="45" fill="#c6c6c6"/>
<rect x="2292.9" y="113" width="19.9" height="13.6" fill="#c6c6c6"/>
<rect x="2280.1" y="133.2" width="32.7" height="11.8" fill="#c6c6c6"/>
<rect x="2352.6" y="110.3" width="45.2" height="2.5" fill="#c6c6c6"/>
<rect x="2359.9" y="115.4" width="12.8" height="32.2" fill="#c6c6c6"/>
<rect x="2377.9" y="115.4" width="15.2" height="19.6" fill="#c6c6c6"/>
<rect x="2418" y="128" width="44.4" height="2.6" fill="#c6c6c6"/>
<rect x="2425" y="112.8" width="12.6" height="32.2" fill="#c6c6c6"/>
<rect x="2442.8" y="117.5" width="14.9" height="22.7" fill="#c6c6c6"/>
<rect x="2482.9" y="147.7" width="45" height="2.5" fill="#c6c6c6"/>
<rect x="2490.4" y="112.8" width="12.6" height="32.7" fill="#c6c6c6"/>
<rect x="2507.7" y="125.3" width="14.9" height="20.2" fill="#c6c6c6"/>
<rect x="2754.3" y="122.8" width="19.4" height="13.8" fill="#6c6c6c" stroke="#c6c6c6" stroke-width="2.6"/>
<path d="M2753.3 121.8 L2744.3 121.8 L2753.3 112.8 Z" fill="#c6c6c6"/>
<line x1="2750.3" y1="118.8" x2="2743.3" y2="111.8" stroke="#c6c6c6" stroke-width="2.6"/>
<path d="M2774.7 121.8 L2783.7 121.8 L2774.7 112.8 Z" fill="#c6c6c6"/>
<line x1="2777.7" y1="118.8" x2="2784.7" y2="111.8" stroke="#c6c6c6" stroke-width="2.6"/>
<path d="M2753.3 137.6 L2744.3 137.6 L2753.3 146.6 Z" fill="#c6c6c6"/>
<line x1="2750.3" y1="140.6" x2="2743.3" y2="147.6" stroke="#c6c6c6" stroke-width="2.6"/>
<path d="M2774.7 137.6 L2783.7 137.6 L2774.7 146.6 Z" fill="#c6c6c6"/>
<line x1="2777.7" y1="140.6" x2="2784.7" y2="147.6" stroke="#c6c6c6" stroke-width="2.6"/>
<rect x="2844.3" y="112.9" width="14.7" height="13.5" fill="#6c6c6c" stroke="#c6c6c6" stroke-width="2.6"/>
<line x1="2844.3" y1="112.9" x2="2840.8" y2="109.4" stroke="#c6c6c6" stroke-width="2.4"/>
<line x1="2859" y1="112.9" x2="2862.5" y2="109.4" stroke="#c6c6c6" stroke-width="2.4"/>
<line x1="2844.3" y1="126.4" x2="2840.8" y2="129.9" stroke="#c6c6c6" stroke-width="2.4"/>
<line x1="2859" y1="126.4" x2="2862.5" y2="129.9" stroke="#c6c6c6" stroke-width="2.4"/>
<rect x="2823.8" y="122.8" width="13.4" height="13.8" fill="#6c6c6c" stroke="#c6c6c6" stroke-width="2.6"/>
<line x1="2823.8" y1="122.8" x2="2820.3" y2="119.3" stroke="#c6c6c6" stroke-width="2.4"/>
<line x1="2837.2" y1="122.8" x2="2840.7" y2="119.3" stroke="#c6c6c6" stroke-width="2.4"/>
<line x1="2823.8" y1="136.6" x2="2820.3" y2="140.1" stroke="#c6c6c6" stroke-width="2.4"/>
<line x1="2837.2" y1="136.6" x2="2840.7" y2="140.1" stroke="#c6c6c6" stroke-width="2.4"/>
<path d="M2839.3 123 L2839.3 150.5 L2846 143.5 L2858.5 143.5 Z" fill="#c6c6c6" stroke="#535353" stroke-width="1.2"/>
<path d="M2878.1 124.6 L2887.6 134 L2897.1 124.6" fill="none" stroke="#ececec" stroke-width="2.8"/>
<rect x="2966.4" y="112.9" width="14.8" height="13.5" fill="#6c6c6c" stroke="#c6c6c6" stroke-width="2.6"/>
<line x1="2966.4" y1="112.9" x2="2962.9" y2="109.4" stroke="#c6c6c6" stroke-width="2.4"/>
<line x1="2981.2" y1="112.9" x2="2984.7" y2="109.4" stroke="#c6c6c6" stroke-width="2.4"/>
<line x1="2966.4" y1="126.4" x2="2962.9" y2="129.9" stroke="#c6c6c6" stroke-width="2.4"/>
<line x1="2981.2" y1="126.4" x2="2984.7" y2="129.9" stroke="#c6c6c6" stroke-width="2.4"/>
<rect x="2945.9" y="122.8" width="14.9" height="13.8" fill="#6c6c6c" stroke="#c6c6c6" stroke-width="2.6"/>
<line x1="2945.9" y1="122.8" x2="2942.4" y2="119.3" stroke="#c6c6c6" stroke-width="2.4"/>
<line x1="2960.8" y1="122.8" x2="2964.3" y2="119.3" stroke="#c6c6c6" stroke-width="2.4"/>
<line x1="2945.9" y1="136.6" x2="2942.4" y2="140.1" stroke="#c6c6c6" stroke-width="2.4"/>
<line x1="2960.8" y1="136.6" x2="2964.3" y2="140.1" stroke="#c6c6c6" stroke-width="2.4"/>
<path d="M2957.2 149.8 L2960.3 140.3 L2978.5 122.3 L2985.3 129 L2967 147.2 Z" fill="#c6c6c6" stroke="#535353" stroke-width="1.2"/>
<path d="M2957.2 149.8 L2959 144.5 L2962.8 148 Z" fill="#6c6c6c"/>
<path d="M3013.1 124.6 L3022.6 134 L3032.1 124.6" fill="none" stroke="#ececec" stroke-width="2.8"/>
<rect x="3746.5" y="115" width="9.8" height="9.9" fill="#c6c6c6"/>
<rect x="3746.5" y="133" width="9.8" height="9.9" fill="#c6c6c6"/>
<rect x="3764.4" y="115" width="9.7" height="9.9" fill="#c6c6c6"/>
<rect x="3764.4" y="133" width="9.7" height="9.9" fill="#c6c6c6"/>
<line x1="3760.3" y1="110.3" x2="3760.3" y2="147.6" stroke="#8e8e8e" stroke-width="2.2"/>
<line x1="3741.5" y1="128.9" x2="3778.7" y2="128.9" stroke="#8e8e8e" stroke-width="2.2"/>
<rect x="3809" y="112.3" width="10.2" height="9.7" fill="#c6c6c6"/>
<rect x="3809" y="124.9" width="10.2" height="9.9" fill="#c6c6c6"/>
<rect x="3809" y="137.7" width="10.2" height="9.9" fill="#c6c6c6"/>
<path d="M3831 122.4 L3835 122.4 A6.5 6.5 0 0 1 3835 135.4 L3831 135.4" fill="none" stroke="#c6c6c6" stroke-width="4.7"/>
<rect x="3824" y="120" width="5.3" height="4.8" fill="#c6c6c6"/>
<rect x="3824" y="133" width="5.3" height="4.8" fill="#c6c6c6"/>
<path d="M3863.55 124.5 L3872.7 133.5 L3881.85 124.5" fill="none" stroke="#7c7c7c" stroke-width="2.4"/>
<rect x="3931.3" y="121.1" width="5.2" height="5.2" fill="#c6c6c6"/>
<rect x="3939.2" y="122.3" width="20" height="2.8" fill="#dcdcdc"/>
<rect x="3931.3" y="128.4" width="5.2" height="5.2" fill="#c6c6c6"/>
<rect x="3939.2" y="129.6" width="20" height="2.8" fill="#dcdcdc"/>
<rect x="3931.3" y="135.7" width="5.2" height="5.2" fill="#c6c6c6"/>
<rect x="3939.2" y="136.9" width="20" height="2.8" fill="#dcdcdc"/>
<path d="M24.7 183.3 L17.9 189.2 L24.7 195.1" fill="none" stroke="#d0d0d0" stroke-width="2"/>
<path d="M34.2 183.3 L27.4 189.2 L34.2 195.1" fill="none" stroke="#d0d0d0" stroke-width="2"/>
<line x1="67" y1="213" x2="67" y2="222.5" stroke="#333333" stroke-width="2.6"/>
<line x1="72.17" y1="213" x2="72.17" y2="222.5" stroke="#333333" stroke-width="2.6"/>
<line x1="77.33" y1="213" x2="77.33" y2="222.5" stroke="#333333" stroke-width="2.6"/>
<line x1="82.5" y1="213" x2="82.5" y2="222.5" stroke="#333333" stroke-width="2.6"/>
<line x1="87.67" y1="213" x2="87.67" y2="222.5" stroke="#333333" stroke-width="2.6"/>
<line x1="92.83" y1="213" x2="92.83" y2="222.5" stroke="#333333" stroke-width="2.6"/>
<line x1="98" y1="213" x2="98" y2="222.5" stroke="#333333" stroke-width="2.6"/>
<line x1="103.17" y1="213" x2="103.17" y2="222.5" stroke="#333333" stroke-width="2.6"/>
<line x1="108.33" y1="213" x2="108.33" y2="222.5" stroke="#333333" stroke-width="2.6"/>
<line x1="113.5" y1="213" x2="113.5" y2="222.5" stroke="#333333" stroke-width="2.6"/>
<path d="M42.7 264.5 L42.7 302.5 L54.3 291.6 L69.5 291.6 Z" fill="none" stroke="#e4e4e4" stroke-width="2.8" stroke-linejoin="miter"/>
<path d="M116.1 262.4 L116.1 304.9 L129.6 292.4 L146.8 292.4 Z" fill="#c6c6c6"/>
<path d="M161.8 299 L161.8 307.7 L159.5 307.7 Z" fill="#ececec"/>
<rect x="87.95" y="253.95" width="67.5" height="56.8" fill="none" stroke="#ff00ff" stroke-width="10.5"/>
<path d="M35.2 360 L61 334.8 L65 338.9 L39.2 364 Z" fill="#c6c6c6"/>
<path d="M48.56 324.96 L49.01 330.99 L54.34 333.86 L48.31 334.31 L45.44 339.64 L44.99 333.61 L39.66 330.74 L45.69 330.29 Z" fill="#c6c6c6"/>
<path d="M68.45 322.33 L68.81 327.15 L73.07 329.45 L68.25 329.81 L65.95 334.07 L65.59 329.25 L61.33 326.95 L66.15 326.59 Z" fill="#c6c6c6"/>
<path d="M70.33 339.89 L70.57 343.1 L73.41 344.63 L70.2 344.87 L68.67 347.71 L68.43 344.5 L65.59 342.97 L68.8 342.73 Z" fill="#c6c6c6"/>
<path d="M147.5 341 C151 331 142 325 129 325 C116 325 107.5 332 110 340 C112 347 120 349 123.5 345 C126 341 121 337.5 117.5 340.5 C113 345 122 350.5 126 350.5 C123 353 124.5 359 118 361" fill="none" stroke="#c6c6c6" stroke-width="2.8" stroke-linecap="round"/>
<path d="M129.4 330.5 L129.4 364.8 L139.3 354.3 L153.6 354.3 Z" fill="#c6c6c6" stroke="#535353" stroke-width="1.2"/>
<path d="M34 419.6 L42.9 396.3 L54.3 391.2 L65.4 402.3 L60.3 413.7 L37 422.8 Z" fill="#c6c6c6"/>
<path d="M61.1 382.9 L73.4 394.9 L67.3 401 L55 389 Z" fill="#c6c6c6"/>
<line x1="35.2" y1="421.2" x2="47" y2="409.6" stroke="#535353" stroke-width="2.4"/>
<circle cx="47.6" cy="409" r="2.7" fill="#535353"/>
<path d="M86.6 419.1 L86.6 427.7 L78 427.7 Z" fill="#c6c6c6"/>
<path d="M113.8 419.6 L122.7 396.3 L134.1 391.2 L145.2 402.3 L140.1 413.7 L116.8 422.8 Z" fill="#c6c6c6"/>
<path d="M140.9 382.9 L153.2 394.9 L147.1 401 L134.8 389 Z" fill="#c6c6c6"/>
<line x1="115" y1="421.2" x2="126.8" y2="409.6" stroke="#535353" stroke-width="2.4"/>
<circle cx="127.4" cy="409" r="2.7" fill="#535353"/>
<path d="M107 385.7 C116 392 113 398 108.5 404 C102 413 104 420 113.8 421.8" fill="none" stroke="#c6c6c6" stroke-width="2.6" stroke-linecap="round"/>
<path d="M36.5 445.1 L71.3 445.1 L71.3 454.9 L66.3 454.9 L66.3 450 L56.5 450 L56.5 475.7 L61.5 475.7 L61.5 479.8 L46.5 479.8 L46.5 475.7 L51.4 475.7 L51.4 450 L41.5 450 L41.5 454.9 L36.5 454.9 Z" fill="#c6c6c6"/>
<path d="M86.6 479.08 L86.6 487.68 L78 487.68 Z" fill="#c6c6c6"/>
<line x1="112.5" y1="478.2" x2="145" y2="446.2" stroke="#c6c6c6" stroke-width="4.2"/>
<path d="M161.7 479.08 L161.7 487.68 L153.1 487.68 Z" fill="#c6c6c6"/>
<rect x="35.5" y="506.8" width="36.9" height="31.4" fill="#6e6e6e" stroke="#d0d0d0" stroke-width="3"/>
<path d="M86.6 539.06 L86.6 547.66 L78 547.66 Z" fill="#c6c6c6"/>
<path d="M124.8 522.5 L145.5 502 C148 500 150.5 502 149 505 L131.2 529 Z" fill="#c6c6c6"/>
<path d="M123.2 525 L129 531 C131 540 120 543 109.3 541.6 C113 539 113.5 536 114.5 531.5 C115.5 526 119 524 123.2 525 Z" fill="#c6c6c6"/>
<path d="M161.7 539.06 L161.7 547.66 L153.1 547.66 Z" fill="#c6c6c6"/>
<circle cx="44.6" cy="581.3" r="14.6" fill="#6e6e6e" stroke="#c6c6c6" stroke-width="2.8"/>
<path d="M45.8 603.2 L47.2 593.5 L75.5 567 C78.5 564.5 83 569 80.5 572 L54 599.8 Z" fill="#c6c6c6" stroke="#535353" stroke-width="2.2"/>
<path d="M86.6 599.04 L86.6 607.64 L78 607.64 Z" fill="#c6c6c6"/>
<path d="M132.4 560.9 L150.7 578.7 L132.6 596.5 L114.8 578.5 Z" fill="#c6c6c6"/>
<path d="M117.7 583.5 L129.3 595.2 L122.3 602.3 L110.5 590.6 Z" fill="none" stroke="#c6c6c6" stroke-width="2.6" stroke-linejoin="round"/>
<path d="M161.7 599.04 L161.7 607.64 L153.1 607.64 Z" fill="#c6c6c6"/>
<path d="M32.6 627.8 L32.6 652 L45.5 639.9 Z" fill="none" stroke="#c6c6c6" stroke-width="2.6"/>
<path d="M73.9 626.1 L73.9 653.7 L58.6 639.9 Z" fill="#c6c6c6"/>
<rect x="51.2" y="622.7" width="2.8" height="2.8" fill="#e6e6e6"/>
<rect x="51.2" y="627.75" width="2.8" height="2.8" fill="#e6e6e6"/>
<rect x="51.2" y="632.8" width="2.8" height="2.8" fill="#e6e6e6"/>
<rect x="51.2" y="637.85" width="2.8" height="2.8" fill="#e6e6e6"/>
<rect x="51.2" y="642.9" width="2.8" height="2.8" fill="#e6e6e6"/>
<rect x="51.2" y="647.95" width="2.8" height="2.8" fill="#e6e6e6"/>
<rect x="51.2" y="653" width="2.8" height="2.8" fill="#e6e6e6"/>
<rect x="51.2" y="658.05" width="2.8" height="2.8" fill="#e6e6e6"/>
<path d="M86.6 659.02 L86.6 667.62 L78 667.62 Z" fill="#c6c6c6"/>
<rect x="118.5" y="624.1" width="31.2" height="26.5" fill="none" stroke="#c6c6c6" stroke-width="2.8"/>
<rect x="108.4" y="642.4" width="21.4" height="18" fill="none" stroke="#c6c6c6" stroke-width="2.8"/>
<line x1="135.4" y1="639" x2="143.5" y2="630.8" stroke="#c6c6c6" stroke-width="2.8"/>
<path d="M138 627.7 L146.6 627.7 L146.6 636.3 Z" fill="#c6c6c6"/>
<path d="M161.7 659.02 L161.7 667.62 L153.1 667.62 Z" fill="#c6c6c6"/>
<path d="M36.5 693 C36 684 45 683.5 48 690 C50.5 696 51 702 56 702 C61 702 63 694.5 70 694.5 C76.5 694.5 78 702 76.5 709 L73.3 709 C73.5 703.5 72 700.5 69.5 700.5 C65 700.5 63 714 51 714 C43 714 40 706 42 698 C43 693 40.5 690 38.8 694.5 Z" fill="#c6c6c6"/>
<line x1="37.2" y1="713.8" x2="58" y2="693.4" stroke="#c6c6c6" stroke-width="2"/>
<circle cx="34.8" cy="716.1" r="3.6" fill="#535353" stroke="#c6c6c6" stroke-width="2"/>
<circle cx="60.3" cy="691.1" r="3.6" fill="#535353" stroke="#c6c6c6" stroke-width="2"/>
<circle cx="46.3" cy="704.6" r="4.6" fill="none" stroke="#535353" stroke-width="1.8"/>
<circle cx="46.3" cy="704.6" r="2.2" fill="#535353"/>
<path d="M86.6 719 L86.6 727.6 L78 727.6 Z" fill="#c6c6c6"/>
<rect x="122.8" y="688.6" width="27.3" height="27.4" fill="none" stroke="#c6c6c6" stroke-width="2.6"/>
<rect x="120.2" y="686" width="5.2" height="5.2" fill="#c6c6c6"/>
<rect x="120.2" y="699.7" width="5.2" height="5.2" fill="#c6c6c6"/>
<rect x="120.2" y="713.4" width="5.2" height="5.2" fill="#c6c6c6"/>
<rect x="133.9" y="686" width="5.2" height="5.2" fill="#c6c6c6"/>
<rect x="133.9" y="713.4" width="5.2" height="5.2" fill="#c6c6c6"/>
<rect x="147.5" y="686" width="5.2" height="5.2" fill="#c6c6c6"/>
<rect x="147.5" y="699.7" width="5.2" height="5.2" fill="#c6c6c6"/>
<rect x="147.5" y="713.4" width="5.2" height="5.2" fill="#c6c6c6"/>
<path d="M105.9 679.6 L105.9 716.4 L117.2 704.9 L132.6 704.9 Z" fill="#c6c6c6" stroke="#535353" stroke-width="1.4"/>
<path d="M161.7 719 L161.7 727.6 L153.1 727.6 Z" fill="#c6c6c6"/>
<circle cx="55.2" cy="758.4" r="15.1" fill="none" stroke="#c6c6c6" stroke-width="2.6"/>
<circle cx="42.4" cy="758.4" r="9.8" fill="#535353" stroke="#c6c6c6" stroke-width="2.6"/>
<path d="M46 749.3 A9.8 9.8 0 0 1 46 767.5" fill="none" stroke="#8a8a8a" stroke-width="1.6"/>
<rect x="36.5" y="757" width="2.8" height="2.8" fill="#ececec"/>
<rect x="41.55" y="757" width="2.8" height="2.8" fill="#ececec"/>
<rect x="46.6" y="757" width="2.8" height="2.8" fill="#ececec"/>
<rect x="51.65" y="757" width="2.8" height="2.8" fill="#ececec"/>
<rect x="56.7" y="757" width="2.8" height="2.8" fill="#ececec"/>
<path d="M60.9 754 L60.9 784.8 L70.4 774.9 L82.6 774.9 Z" fill="#c6c6c6" stroke="#535353" stroke-width="1.4"/>
<path d="M86.6 778.98 L86.6 787.58 L78 787.58 Z" fill="#c6c6c6"/>
<path d="M107.8 743.5 L132 751 L132 763 L107.8 781.6 Z" fill="none" stroke="#c6c6c6" stroke-width="2.4" stroke-linejoin="miter"/>
<line x1="116.8" y1="746.5" x2="116.8" y2="774.5" stroke="#c6c6c6" stroke-width="2.2"/>
<line x1="125" y1="749" x2="125" y2="768.3" stroke="#c6c6c6" stroke-width="2.2"/>
<line x1="107.8" y1="762" x2="132" y2="757" stroke="#c6c6c6" stroke-width="2.2"/>
<line x1="131" y1="762.3" x2="139.2" y2="762.3" stroke="#aaaaaa" stroke-width="2.4" opacity="0.45"/>
<line x1="126" y1="767.4" x2="143.5" y2="767.4" stroke="#aaaaaa" stroke-width="2.4" opacity="0.55"/>
<line x1="118" y1="773.7" x2="147.3" y2="773.7" stroke="#aaaaaa" stroke-width="2.4" opacity="0.65"/>
<line x1="108.5" y1="781.2" x2="151.1" y2="781.2" stroke="#aaaaaa" stroke-width="2.4" opacity="0.8"/>
<path d="M161.7 778.98 L161.7 787.58 L153.1 787.58 Z" fill="#c6c6c6"/>
<rect x="35.5" y="806.6" width="36.9" height="31.4" fill="none" stroke="#c6c6c6" stroke-width="3"/>
<path d="M36 819 C46 813 52 815 57 820 C62 825 66 826 72 825 M36 838 C42 828 50 826 55 830 C59 833 62 836 64 838 M45 807 C52 816 53 828 47 838 M59 807 C67 817 67 829 61 838" fill="none" stroke="#c6c6c6" stroke-width="2.2"/>
<defs><linearGradient id="gtool" x1="0" x2="1" y1="0" y2="0"><stop offset="0" stop-color="#1c1c1c"/><stop offset="1" stop-color="#cfcfcf"/></linearGradient></defs>
<rect x="110.5" y="806.6" width="37.1" height="31.4" fill="url(#gtool)" stroke="#d2d2d2" stroke-width="3"/>
<path d="M53.5 877 L37.8 894 C34.5 897 35 901.5 38.8 901.5 C41 901.5 42 900.5 44 898.5 L60.5 883.5" fill="none" stroke="#c6c6c6" stroke-width="2.8" stroke-linejoin="round"/>
<path d="M52.5 872 L56.2 868.5 L58.8 871 L64.5 865 C68 861.5 73.5 863 74.3 867.5 C74.8 870.5 73 872.3 71.5 874 L66 879.7 L68.6 882.4 L65 886 Z" fill="#c6c6c6"/>
<path d="M86.6 898.94 L86.6 907.54 L78 907.54 Z" fill="#c6c6c6"/>
<rect x="106.5" y="865.3" width="20" height="19.1" fill="#c6c6c6"/>
<rect x="119.8" y="873.7" width="18.2" height="18.5" rx="6.5" fill="#8a8a8a" stroke="#c6c6c6" stroke-width="2.6"/>
<rect x="119.8" y="873.7" width="18.2" height="18.5" rx="8" fill="none" stroke="#535353" stroke-width="1.3" transform="translate(-1.3 -1.3) scale(1)" opacity="0"/>
<circle cx="141.3" cy="889.9" r="9.1" fill="#535353" stroke="#d6d6d6" stroke-width="2.8"/>
<rect x="53.6" y="934.2" width="21.1" height="26.5" fill="none" stroke="#c6c6c6" stroke-width="2.8"/>
<rect x="59.4" y="922.6" width="9.4" height="10.9" fill="#c6c6c6"/>
<rect x="56.7" y="925.5" width="3.3" height="3.7" fill="#c6c6c6"/>
<circle cx="63.9" cy="947.6" r="5.5" fill="none" stroke="#c6c6c6" stroke-width="3.4"/>
<circle cx="34" cy="927.2" r="2.7" fill="#c6c6c6"/>
<circle cx="41.4" cy="927.2" r="2.7" fill="#c6c6c6"/>
<circle cx="49" cy="927.2" r="2.7" fill="#c6c6c6"/>
<circle cx="34" cy="934.9" r="2.7" fill="#c6c6c6"/>
<circle cx="41.4" cy="934.9" r="2.7" fill="#c6c6c6"/>
<circle cx="34" cy="942.4" r="2.7" fill="#c6c6c6"/>
<path d="M86.6 958.92 L86.6 967.52 L78 967.52 Z" fill="#c6c6c6"/>
<path d="M107.8 922.6 L107.8 959.1 L151.5 959.1" fill="none" stroke="#d6d6d6" stroke-width="2.8"/>
<rect x="117.1" y="940" width="6.6" height="17.7" fill="#c6c6c6"/>
<rect x="129.5" y="925.1" width="6.7" height="32.6" fill="#c6c6c6"/>
<rect x="142.2" y="930.2" width="6.8" height="27.5" fill="#c6c6c6"/>
<path d="M161.7 958.92 L161.7 967.52 L153.1 967.52 Z" fill="#c6c6c6"/>
<path d="M42.9 993.7 L63 993.7 L70 1000.7 L70 1018.5 L42.9 1018.5 Z" fill="#6e6e6e" stroke="#d0d0d0" stroke-width="2.6"/>
<path d="M63 993.7 L63 1000.7 L70 1000.7 Z" fill="#d0d0d0"/>
<line x1="42.5" y1="980" x2="42.5" y2="989.7" stroke="#e0e0e0" stroke-width="2.6"/>
<line x1="28.8" y1="993.6" x2="38.9" y2="993.6" stroke="#e0e0e0" stroke-width="2.6"/>
<path d="M108.2 1022 L131.8 995 L139.5 1000.3 L134 1008.5 Z" fill="none" stroke="#c6c6c6" stroke-width="2.6" stroke-linejoin="miter"/>
<path d="M130.5 992 L137.3 981.7 L149.7 990.5 L142.5 1000.8 Z" fill="#c6c6c6"/>
<path d="M161.7 1018.9 L161.7 1027.5 L153.1 1027.5 Z" fill="#c6c6c6"/>
<path d="M47 1081 C43 1077 39 1070 34.5 1063.5 C32.5 1060.5 36 1058.5 38.5 1060.5 L45 1066 L43.3 1050.5 C42.8 1046.5 47.8 1046 48.7 1049.5 L51.3 1061 L51.5 1044.5 C51.5 1041 56.5 1041 56.8 1044.5 L57.8 1061 L60 1047.5 C60.7 1044 65.5 1045 65 1048.5 L63.7 1064 L68.5 1054.5 C70 1051.5 74 1053.5 72.8 1056.5 C69.5 1064 67 1071 65 1076.5 C63 1081.5 59.5 1083 55 1083 C51.5 1083 49 1082.8 47 1081 Z" fill="#c6c6c6"/>
<path d="M86.6 1078.88 L86.6 1087.48 L78 1087.48 Z" fill="#c6c6c6"/>
<circle cx="124.2" cy="1057.3" r="13.8" fill="none" stroke="#d0d0d0" stroke-width="3"/>
<line x1="134.6" y1="1068.2" x2="146.8" y2="1080.4" stroke="#c6c6c6" stroke-width="5.6" stroke-linecap="round"/>
<path d="M136.5 1120.3 C145 1120.3 148.8 1124 148.8 1131" fill="none" stroke="#c6c6c6" stroke-width="4.4"/>
<path d="M128.5 1120.3 L137 1112.3 L137 1128.3 Z" fill="#c6c6c6"/>
<path d="M140.8 1130.5 L156.8 1130.5 L148.8 1140.2 Z" fill="#c6c6c6"/>
<rect x="24.6" y="1219.9" width="21.9" height="21.9" fill="#000" stroke="#dcdcdc" stroke-width="1.6"/>
<path d="M31 1237 L38.5 1237 L38.5 1229" fill="none" stroke="#eaeaea" stroke-width="1.8"/>
<rect x="16.7" y="1212.6" width="22.5" height="22.4" fill="#000" stroke="#dcdcdc" stroke-width="1.6"/>
<rect x="21.4" y="1216.8" width="13.1" height="13" fill="#fff"/>
<rect x="23.8" y="1269.8" width="33" height="32.6" fill="#000"/>
<rect x="31.8" y="1277.3" width="17.2" height="17.2" fill="#333"/>
<defs><linearGradient id="gbw" x1="0" x2="1" y1="0" y2="0"><stop offset="0" stop-color="#ffffff"/><stop offset="1" stop-color="#111111"/></linearGradient></defs>
<rect x="75.2" y="1270.9" width="30.4" height="30.4" fill="url(#gbw)" stroke="#000" stroke-width="2.4"/>
<rect x="125.1" y="1270.9" width="30.5" height="30.4" fill="#fff" stroke="#000" stroke-width="2.4"/>
<line x1="126.5" y1="1300" x2="154.3" y2="1272.2" stroke="#e8291c" stroke-width="4.2"/>
<circle cx="38.8" cy="1344.4" r="8.7" fill="#777" stroke="#c6c6c6" stroke-width="2"/>
<rect x="39.2" y="1345.3" width="14.6" height="14.4" fill="#d0d0d0"/>
<rect x="89.1" y="1345.3" width="14.6" height="14.4" fill="#d0d0d0"/>
<circle cx="88.7" cy="1344.4" r="8.7" fill="#777" stroke="#c6c6c6" stroke-width="2"/>
<circle cx="138.9" cy="1344.7" r="8.7" fill="#777" stroke="#c6c6c6" stroke-width="2"/>
<path d="M140.3 1346 L147.5 1346 A8.7 8.7 0 0 1 140.3 1353.3 Z" fill="#d0d0d0"/>
<rect x="65.6" y="1401.5" width="31.6" height="26.4" fill="#777" stroke="#d0d0d0" stroke-width="2.4"/>
<rect x="65.6" y="1401.5" width="31.6" height="5" fill="#d0d0d0"/>
<rect x="85.5" y="1391.5" width="31.9" height="26.7" fill="#777" stroke="#d0d0d0" stroke-width="2.4"/>
<rect x="85.5" y="1391.5" width="31.9" height="5.5" fill="#d0d0d0"/>
<circle cx="78.2" cy="1489.6" r="4.7" fill="#c6c6c6"/>
<circle cx="91.4" cy="1489.6" r="4.7" fill="#c6c6c6"/>
<circle cx="104.6" cy="1489.6" r="4.7" fill="#c6c6c6"/>
<line x1="205.8" y1="201.8" x2="221.8" y2="217.8" stroke="#efefef" stroke-width="3"/>
<line x1="221.8" y1="201.8" x2="205.8" y2="217.8" stroke="#efefef" stroke-width="3"/>
<path d="M3241.2 2481.5 L3249.7 2489.5 L3258.2 2481.5" fill="none" stroke="#bdbdbd" stroke-width="2.2"/>
<path d="M335.7 2528.75 L344.2 2537.25 L352.7 2528.75" fill="none" stroke="#e6e6e6" stroke-width="2.6"/>
<path d="M518.95 2528.75 L527.45 2537.25 L535.95 2528.75" fill="none" stroke="#e6e6e6" stroke-width="2.6"/>
<path d="M768.1 2528.75 L776.6 2537.25 L785.1 2528.75" fill="none" stroke="#e6e6e6" stroke-width="2.6"/>
<rect x="571.5" y="2519.5" width="3.5" height="21.5" fill="#707070"/>
<path d="M591.5 2519.5 L591.5 2541 L577.5 2530.3 Z" fill="#707070"/>
<path d="M629.5 2519.5 L629.5 2541 L615.5 2530.3 Z" fill="#707070"/>
<path d="M822.5 2519.5 L822.5 2541 L836.5 2530.3 Z" fill="#707070"/>
<path d="M861.5 2519.5 L861.5 2541 L875.5 2530.3 Z" fill="#707070"/>
<rect x="877.5" y="2519.5" width="3.5" height="21.5" fill="#707070"/>
<path d="M1420.5 2519 L1420.5 2541 L1433.5 2530 Z" fill="#d8d8d8"/>
<path d="M1474.45 2520 L1465.95 2528.5 L1474.45 2537" fill="none" stroke="#bdbdbd" stroke-width="2.2"/>
<path d="M3202.75 2520 L3211.25 2528.5 L3202.75 2537" fill="none" stroke="#bdbdbd" stroke-width="2.2"/>
<path d="M1637.8 899.4 A51.8 51.8 0 0 1 1736.2 899.4 L1921.4 1461.8 A51.8 51.8 0 0 1 1921.42 1494.16 L1736.22 2058.36 A51.8 51.8 0 0 1 1637.78 2058.36 L1452.58 1494.16 A51.8 51.8 0 0 1 1452.6 1461.8 L1637.8 899.4 Z" fill="none" stroke="#161616" stroke-width="4.4"/>
<path d="M1638.99 896.16 A51.8 51.8 0 0 1 1735.01 896.16 L1920.01 1353.06 A51.8 51.8 0 0 1 1920.01 1391.94 L1735.01 1848.74 A51.8 51.8 0 0 1 1638.99 1848.74 L1453.99 1391.94 A51.8 51.8 0 0 1 1453.99 1353.06 L1638.99 896.16 Z" fill="#fff" stroke="#161616" stroke-width="4.4"/>
<path d="M1637.8 899.4 A51.8 51.8 0 0 1 1736.2 899.4 L1921.4 1461.8 A51.8 51.8 0 0 1 1921.42 1494.16 L1736.22 2058.36 A51.8 51.8 0 0 1 1637.78 2058.36 L1452.58 1494.16 A51.8 51.8 0 0 1 1452.6 1461.8 L1637.8 899.4 Z" fill="none" stroke="#4f7fff" stroke-width="2"/>
<path d="M1638.99 896.16 A51.8 51.8 0 0 1 1735.01 896.16 L1920.01 1353.06 A51.8 51.8 0 0 1 1920.01 1391.94 L1735.01 1848.74 A51.8 51.8 0 0 1 1638.99 1848.74 L1453.99 1391.94 A51.8 51.8 0 0 1 1453.99 1353.06 L1638.99 896.16 Z" fill="none" stroke="#4f7fff" stroke-width="1.9"/>
<rect x="1729.31" y="890.16" width="12" height="12" fill="#4f7fff"/>
<rect x="1914.31" y="1347.06" width="12" height="12" fill="#4f7fff"/>
<rect x="1914.31" y="1385.94" width="12" height="12" fill="#4f7fff"/>
<rect x="1729.31" y="1842.74" width="12" height="12" fill="#4f7fff"/>
<rect x="1633.29" y="1842.74" width="12" height="12" fill="#4f7fff"/>
<rect x="1448.29" y="1385.94" width="12" height="12" fill="#4f7fff"/>
<rect x="1448.29" y="1347.06" width="12" height="12" fill="#4f7fff"/>
<rect x="1633.29" y="890.16" width="12" height="12" fill="#4f7fff"/>
<circle cx="1687.2" cy="915.8" r="8.6" fill="#fff" stroke="#4f7fff" stroke-width="1.9"/>
<circle cx="1687.2" cy="915.8" r="3.8" fill="#4f7fff"/>
<circle cx="1502" cy="1372.3" r="8.6" fill="#fff" stroke="#4f7fff" stroke-width="1.9"/>
<circle cx="1502" cy="1372.3" r="3.8" fill="#4f7fff"/>
<circle cx="1872" cy="1372.3" r="8.6" fill="#fff" stroke="#4f7fff" stroke-width="1.9"/>
<circle cx="1872" cy="1372.3" r="3.8" fill="#4f7fff"/>
<circle cx="1687" cy="1829.3" r="8.6" fill="#fff" stroke="#4f7fff" stroke-width="1.9"/>
<circle cx="1687" cy="1829.3" r="3.8" fill="#4f7fff"/>
<rect x="1679.2" y="1881.5" width="9.6" height="196" fill="#ff00ff"/>
<path d="M1667.5 2076 L1699.4 2076 L1683.9 2092.3 Z" fill="#ff00ff"/>
<path d="M3344.7 182.8 L3337.9 188.7 L3344.7 194.6" fill="none" stroke="#d0d0d0" stroke-width="2"/>
<path d="M3968.3 182.8 L3975.1 188.7 L3968.3 194.6" fill="none" stroke="#d0d0d0" stroke-width="2"/>
<path d="M3354.2 182.8 L3347.4 188.7 L3354.2 194.6" fill="none" stroke="#d0d0d0" stroke-width="2"/>
<path d="M3977.8 182.8 L3984.6 188.7 L3977.8 194.6" fill="none" stroke="#d0d0d0" stroke-width="2"/>
<line x1="3299.5" y1="213" x2="3299.5" y2="222.6" stroke="#353535" stroke-width="2.6"/>
<line x1="3304.72" y1="213" x2="3304.72" y2="222.6" stroke="#353535" stroke-width="2.6"/>
<line x1="3309.94" y1="213" x2="3309.94" y2="222.6" stroke="#353535" stroke-width="2.6"/>
<line x1="3315.17" y1="213" x2="3315.17" y2="222.6" stroke="#353535" stroke-width="2.6"/>
<line x1="3320.39" y1="213" x2="3320.39" y2="222.6" stroke="#353535" stroke-width="2.6"/>
<line x1="3325.61" y1="213" x2="3325.61" y2="222.6" stroke="#353535" stroke-width="2.6"/>
<line x1="3330.83" y1="213" x2="3330.83" y2="222.6" stroke="#353535" stroke-width="2.6"/>
<line x1="3336.06" y1="213" x2="3336.06" y2="222.6" stroke="#353535" stroke-width="2.6"/>
<line x1="3341.28" y1="213" x2="3341.28" y2="222.6" stroke="#353535" stroke-width="2.6"/>
<line x1="3346.5" y1="213" x2="3346.5" y2="222.6" stroke="#353535" stroke-width="2.6"/>
<line x1="3299.5" y1="384.7" x2="3299.5" y2="394.3" stroke="#353535" stroke-width="2.6"/>
<line x1="3304.72" y1="384.7" x2="3304.72" y2="394.3" stroke="#353535" stroke-width="2.6"/>
<line x1="3309.94" y1="384.7" x2="3309.94" y2="394.3" stroke="#353535" stroke-width="2.6"/>
<line x1="3315.17" y1="384.7" x2="3315.17" y2="394.3" stroke="#353535" stroke-width="2.6"/>
<line x1="3320.39" y1="384.7" x2="3320.39" y2="394.3" stroke="#353535" stroke-width="2.6"/>
<line x1="3325.61" y1="384.7" x2="3325.61" y2="394.3" stroke="#353535" stroke-width="2.6"/>
<line x1="3330.83" y1="384.7" x2="3330.83" y2="394.3" stroke="#353535" stroke-width="2.6"/>
<line x1="3336.06" y1="384.7" x2="3336.06" y2="394.3" stroke="#353535" stroke-width="2.6"/>
<line x1="3341.28" y1="384.7" x2="3341.28" y2="394.3" stroke="#353535" stroke-width="2.6"/>
<line x1="3346.5" y1="384.7" x2="3346.5" y2="394.3" stroke="#353535" stroke-width="2.6"/>
<line x1="3299.5" y1="557.2" x2="3299.5" y2="566.8" stroke="#353535" stroke-width="2.6"/>
<line x1="3304.72" y1="557.2" x2="3304.72" y2="566.8" stroke="#353535" stroke-width="2.6"/>
<line x1="3309.94" y1="557.2" x2="3309.94" y2="566.8" stroke="#353535" stroke-width="2.6"/>
<line x1="3315.17" y1="557.2" x2="3315.17" y2="566.8" stroke="#353535" stroke-width="2.6"/>
<line x1="3320.39" y1="557.2" x2="3320.39" y2="566.8" stroke="#353535" stroke-width="2.6"/>
<line x1="3325.61" y1="557.2" x2="3325.61" y2="566.8" stroke="#353535" stroke-width="2.6"/>
<line x1="3330.83" y1="557.2" x2="3330.83" y2="566.8" stroke="#353535" stroke-width="2.6"/>
<line x1="3336.06" y1="557.2" x2="3336.06" y2="566.8" stroke="#353535" stroke-width="2.6"/>
<line x1="3341.28" y1="557.2" x2="3341.28" y2="566.8" stroke="#353535" stroke-width="2.6"/>
<line x1="3346.5" y1="557.2" x2="3346.5" y2="566.8" stroke="#353535" stroke-width="2.6"/>
<line x1="3299.5" y1="798.8" x2="3299.5" y2="808.4" stroke="#353535" stroke-width="2.6"/>
<line x1="3304.72" y1="798.8" x2="3304.72" y2="808.4" stroke="#353535" stroke-width="2.6"/>
<line x1="3309.94" y1="798.8" x2="3309.94" y2="808.4" stroke="#353535" stroke-width="2.6"/>
<line x1="3315.17" y1="798.8" x2="3315.17" y2="808.4" stroke="#353535" stroke-width="2.6"/>
<line x1="3320.39" y1="798.8" x2="3320.39" y2="808.4" stroke="#353535" stroke-width="2.6"/>
<line x1="3325.61" y1="798.8" x2="3325.61" y2="808.4" stroke="#353535" stroke-width="2.6"/>
<line x1="3330.83" y1="798.8" x2="3330.83" y2="808.4" stroke="#353535" stroke-width="2.6"/>
<line x1="3336.06" y1="798.8" x2="3336.06" y2="808.4" stroke="#353535" stroke-width="2.6"/>
<line x1="3341.28" y1="798.8" x2="3341.28" y2="808.4" stroke="#353535" stroke-width="2.6"/>
<line x1="3346.5" y1="798.8" x2="3346.5" y2="808.4" stroke="#353535" stroke-width="2.6"/>
<line x1="3299.5" y1="972.3" x2="3299.5" y2="981.9" stroke="#353535" stroke-width="2.6"/>
<line x1="3304.72" y1="972.3" x2="3304.72" y2="981.9" stroke="#353535" stroke-width="2.6"/>
<line x1="3309.94" y1="972.3" x2="3309.94" y2="981.9" stroke="#353535" stroke-width="2.6"/>
<line x1="3315.17" y1="972.3" x2="3315.17" y2="981.9" stroke="#353535" stroke-width="2.6"/>
<line x1="3320.39" y1="972.3" x2="3320.39" y2="981.9" stroke="#353535" stroke-width="2.6"/>
<line x1="3325.61" y1="972.3" x2="3325.61" y2="981.9" stroke="#353535" stroke-width="2.6"/>
<line x1="3330.83" y1="972.3" x2="3330.83" y2="981.9" stroke="#353535" stroke-width="2.6"/>
<line x1="3336.06" y1="972.3" x2="3336.06" y2="981.9" stroke="#353535" stroke-width="2.6"/>
<line x1="3341.28" y1="972.3" x2="3341.28" y2="981.9" stroke="#353535" stroke-width="2.6"/>
<line x1="3346.5" y1="972.3" x2="3346.5" y2="981.9" stroke="#353535" stroke-width="2.6"/>
<line x1="3299.5" y1="1213.8" x2="3299.5" y2="1223.4" stroke="#353535" stroke-width="2.6"/>
<line x1="3304.72" y1="1213.8" x2="3304.72" y2="1223.4" stroke="#353535" stroke-width="2.6"/>
<line x1="3309.94" y1="1213.8" x2="3309.94" y2="1223.4" stroke="#353535" stroke-width="2.6"/>
<line x1="3315.17" y1="1213.8" x2="3315.17" y2="1223.4" stroke="#353535" stroke-width="2.6"/>
<line x1="3320.39" y1="1213.8" x2="3320.39" y2="1223.4" stroke="#353535" stroke-width="2.6"/>
<line x1="3325.61" y1="1213.8" x2="3325.61" y2="1223.4" stroke="#353535" stroke-width="2.6"/>
<line x1="3330.83" y1="1213.8" x2="3330.83" y2="1223.4" stroke="#353535" stroke-width="2.6"/>
<line x1="3336.06" y1="1213.8" x2="3336.06" y2="1223.4" stroke="#353535" stroke-width="2.6"/>
<line x1="3341.28" y1="1213.8" x2="3341.28" y2="1223.4" stroke="#353535" stroke-width="2.6"/>
<line x1="3346.5" y1="1213.8" x2="3346.5" y2="1223.4" stroke="#353535" stroke-width="2.6"/>
<path d="M3331 245 C3343 243.5 3350.5 251 3350 261 C3349.5 273 3337 280 3323 280 C3309 280 3300.5 274.5 3300.5 267.5 C3300.5 260.5 3306 258 3311.5 257.5 C3317 257 3318 254.5 3318.5 251.5 C3319.5 247.5 3324 245.8 3331 245 Z" fill="#cacaca"/>
<circle cx="3339" cy="256.5" r="2.8" fill="#2e2e2e"/>
<circle cx="3342" cy="264" r="3.2" fill="#2e2e2e"/>
<circle cx="3334.5" cy="270.5" r="3.7" fill="#2e2e2e"/>
<circle cx="3324.5" cy="273" r="4.2" fill="#2e2e2e"/>
<circle cx="3313" cy="269" r="4.6" fill="#2e2e2e"/>
<path d="M3309.5 314.5 C3329 315.5 3341 328 3342.5 351.5 L3309.5 351.5 Z" fill="#e6e6e6" stroke="#c6c6c6" stroke-width="2.2"/>
<clipPath id="cgc"><path d="M3311 316 C3328 317.5 3339.5 329 3341 350 L3311 350 Z"/></clipPath>
<path d="M3311 350 L3311 302 L3321.68 303.2 Z" fill="#1a1a1a" clip-path="url(#cgc)"/>
<path d="M3311 350 L3321.68 303.2 L3331.83 306.75 Z" fill="#3a3a3a" clip-path="url(#cgc)"/>
<path d="M3311 350 L3331.83 306.75 L3340.93 312.47 Z" fill="#5a5a5a" clip-path="url(#cgc)"/>
<path d="M3311 350 L3340.93 312.47 L3348.53 320.07 Z" fill="#7c7c7c" clip-path="url(#cgc)"/>
<path d="M3311 350 L3348.53 320.07 L3354.25 329.17 Z" fill="#a0a0a0" clip-path="url(#cgc)"/>
<path d="M3311 350 L3354.25 329.17 L3357.8 339.32 Z" fill="#c8c8c8" clip-path="url(#cgc)"/>
<path d="M3311 350 L3357.8 339.32 L3359 350 Z" fill="#f2f2f2" clip-path="url(#cgc)"/>
<rect x="3314" y="440" width="23" height="20.5" rx="3" fill="#c6c6c6"/>
<path d="M3321.5 439 L3319.2 416 L3317.5 416 L3317.5 411 L3321 411 L3320.5 406 L3324 406 L3324.5 411 L3327 411 L3327 416 L3325 416 L3326.5 439 Z" fill="#c6c6c6"/>
<path d="M3316 439 C3312.5 432 3306 430.5 3306.5 421.5 C3307 417 3310 413.5 3312.5 411.5 C3312 417 3316.5 420 3316 426 Z" fill="#c6c6c6"/>
<path d="M3329 439 L3335 425 M3332 439 L3338.5 425.5" fill="none" stroke="#c6c6c6" stroke-width="2.4"/>
<path d="M3333.5 426 C3334.5 419 3341 415.5 3346.5 418.5 C3349 420 3347 423 3344 423.5 C3341 424 3340 426 3339.5 428 Z" fill="#c6c6c6"/>
<circle cx="3325.5" cy="492.5" r="9.1" fill="#c6c6c6"/>
<circle cx="3314.6" cy="505.5" r="9.3" fill="#c6c6c6"/>
<circle cx="3336.4" cy="505.5" r="9.3" fill="#c6c6c6"/>
<path d="M3325.5 500 C3325.5 512 3322.5 518 3314.5 523.5 L3336.5 523.5 C3328.5 518 3325.5 512 3325.5 500 Z" fill="#c6c6c6"/>
<rect x="3311.5" y="522" width="28" height="2.4" fill="#c6c6c6"/>
<rect x="3303.8" y="592.5" width="42.7" height="2.7" fill="#e0e0e0"/>
<rect x="3303.8" y="603" width="42.7" height="5.4" fill="#c6c6c6"/>
<rect x="3303.8" y="615" width="42.7" height="8" fill="#c6c6c6"/>
<defs><linearGradient id="gpan" x1="0" x2="1"><stop offset="0" stop-color="#1e1e1e"/><stop offset="1" stop-color="#d8d8d8"/></linearGradient></defs>
<rect x="3305" y="663.5" width="41" height="28.8" fill="url(#gpan)" stroke="#d0d0d0" stroke-width="2.6"/>
<circle cx="3317.5" cy="744" r="15.5" fill="#d0d0d0"/>
<circle cx="3331.5" cy="757" r="14" fill="#8a8a8a" stroke="#d0d0d0" stroke-width="2.6"/>
<circle cx="3325.5" cy="850.4" r="14.5" fill="#d0d0d0"/>
<circle cx="3325.5" cy="850.4" r="20" fill="none" stroke="#d0d0d0" stroke-width="2.4" stroke-dasharray="6.2 4.3"/>
<rect x="3312.7" y="903.8" width="33.3" height="32.4" fill="none" stroke="#c6c6c6" stroke-width="2.6"/>
<rect x="3305.2" y="922.3" width="13.2" height="12.9" fill="#535353" stroke="#c6c6c6" stroke-width="2.4"/>
<rect x="3311.3" y="928.5" width="13.4" height="12.9" fill="#535353" stroke="#c6c6c6" stroke-width="2.4"/>
<path d="M3325.5 1002.3 L3346 1016.2 L3325.5 1030 L3305 1016.2 Z" fill="#d0d0d0"/>
<path d="M3305 1030.2 L3311.8 1025.8 L3325.5 1035 L3339.2 1025.8 L3346 1030.2 L3325.5 1044.4 Z" fill="#d0d0d0"/>
<path d="M3325 1078.4 L3307.4 1078.4 L3307.4 1111.2 L3341.3 1111.2 L3341.3 1095" fill="none" stroke="#c6c6c6" stroke-width="4.6"/>
<line x1="3331.3" y1="1087.3" x2="3344" y2="1074.5" stroke="#c6c6c6" stroke-width="4.2"/>
<path d="M3330 1069.8 L3348.8 1069.8 L3348.8 1089 L3344 1089 L3344 1074.6 L3330 1074.6 Z" fill="#c6c6c6"/>
<rect x="3302.5" y="1141.3" width="25" height="31.2" fill="none" stroke="#c6c6c6" stroke-width="2.4"/>
<rect x="3312.3" y="1158.8" width="33.7" height="23.9" fill="#535353" stroke="#c6c6c6" stroke-width="2.4"/>
<path d="M3310 1244 L3341.5 1244 C3344.8 1244 3346.5 1245.7 3346.5 1249 L3346.5 1268.5 C3346.5 1271.8 3344.8 1273.5 3341.5 1273.5 L3323 1273.5 L3311.5 1286 L3313 1273.5 L3310 1273.5 C3306.7 1273.5 3305 1271.8 3305 1268.5 L3305 1249 C3305 1245.7 3306.7 1244 3310 1244 Z" fill="#d0d0d0"/>
<rect x="3406.9" y="474" width="36.1" height="35" fill="none" stroke="#c6c6c6" stroke-width="2"/>
<rect x="3402.7" y="469.8" width="8.4" height="8.4" fill="#535353" stroke="#c6c6c6" stroke-width="2.3"/>
<rect x="3402.7" y="487.4" width="8.4" height="8.4" fill="#535353" stroke="#c6c6c6" stroke-width="2.3"/>
<rect x="3402.7" y="504.8" width="8.4" height="8.4" fill="#535353" stroke="#c6c6c6" stroke-width="2.3"/>
<rect x="3420.8" y="469.8" width="8.4" height="8.4" fill="#535353" stroke="#c6c6c6" stroke-width="2.3"/>
<rect x="3420.4" y="487" width="9.2" height="9.2" fill="#ffffff" stroke="#d6d6d6" stroke-width="1.8"/>
<rect x="3420.8" y="504.8" width="8.4" height="8.4" fill="#535353" stroke="#c6c6c6" stroke-width="2.3"/>
<rect x="3438.8" y="469.8" width="8.4" height="8.4" fill="#535353" stroke="#c6c6c6" stroke-width="2.3"/>
<rect x="3438.8" y="487.4" width="8.4" height="8.4" fill="#535353" stroke="#c6c6c6" stroke-width="2.3"/>
<rect x="3438.8" y="504.8" width="8.4" height="8.4" fill="#535353" stroke="#c6c6c6" stroke-width="2.3"/>
<path d="M3922.9 486 L3922.9 479.2 A4.8 4.8 0 0 1 3932.5 479.2 L3932.5 491.5 A5.2 5.2 0 0 1 3927.3 496.8" fill="none" stroke="#ffffff" stroke-width="4.2" stroke-linecap="butt"/>
<path d="M3932.5 499 L3932.5 505.8 A4.8 4.8 0 0 1 3922.9 505.8 L3922.9 493.5 A5.2 5.2 0 0 1 3928.1 488.2" fill="none" stroke="#2e2e2e" stroke-width="6.6" stroke-linecap="butt"/>
<path d="M3932.5 499 L3932.5 505.8 A4.8 4.8 0 0 1 3922.9 505.8 L3922.9 493.5 A5.2 5.2 0 0 1 3928.1 488.2" fill="none" stroke="#ffffff" stroke-width="4.2" stroke-linecap="butt"/>
<path d="M3466 590.5 L3486.5 571.5 M3466 590.5 L3490 590.5" fill="none" stroke="#c6c6c6" stroke-width="2.6" stroke-linecap="round"/>
<path d="M3479 578.5 A 14 14 0 0 1 3484.5 590" fill="none" stroke="#c6c6c6" stroke-width="2.2"/>
<circle cx="3497.5" cy="579.5" r="1.9" fill="#c6c6c6"/>
<circle cx="3497.5" cy="589.5" r="1.9" fill="#c6c6c6"/>
<path d="M3629.5 584.5 L3638.5 593.5 L3647.5 584.5" fill="none" stroke="#ececec" stroke-width="2.8"/>
<path d="M3769.3 581.3 L3769.3 601.5 L3778.3 591.4 Z" fill="none" stroke="#c6c6c6" stroke-width="2.1"/>
<path d="M3800.2 579.8 L3800.2 603 L3789.3 591.4 Z" fill="#c6c6c6"/>
<rect x="3783.3" y="577.2" width="2" height="2.5" fill="#e0e0e0"/>
<rect x="3783.3" y="582.1" width="2" height="2.5" fill="#e0e0e0"/>
<rect x="3783.3" y="587" width="2" height="2.5" fill="#e0e0e0"/>
<rect x="3783.3" y="591.9" width="2" height="2.5" fill="#e0e0e0"/>
<rect x="3783.3" y="596.8" width="2" height="2.5" fill="#e0e0e0"/>
<rect x="3783.3" y="601.7" width="2" height="2.5" fill="#e0e0e0"/>
<path d="M3833.5 575.2 L3856 575.2 L3844.7 586 Z" fill="#c6c6c6"/>
<path d="M3835.7 606 L3853.7 606 L3844.7 597.6 Z" fill="none" stroke="#c6c6c6" stroke-width="2.1"/>
<rect x="3831.5" y="590.3" width="2.5" height="2" fill="#e0e0e0"/>
<rect x="3836.2" y="590.3" width="2.5" height="2" fill="#e0e0e0"/>
<rect x="3840.9" y="590.3" width="2.5" height="2" fill="#e0e0e0"/>
<rect x="3845.6" y="590.3" width="2.5" height="2" fill="#e0e0e0"/>
<rect x="3850.3" y="590.3" width="2.5" height="2" fill="#e0e0e0"/>
<rect x="3855" y="590.3" width="2.5" height="2" fill="#e0e0e0"/>
<circle cx="3923.4" cy="642.7" r="4.3" fill="#c8c8c8"/>
<circle cx="3936.4" cy="642.7" r="4.3" fill="#c8c8c8"/>
<circle cx="3949.4" cy="642.7" r="4.3" fill="#c8c8c8"/>
<rect x="3415.5" y="846.5" width="17" height="16.7" fill="#555" stroke="#fff" stroke-width="2.4"/>
<path d="M3624.2 846.75 L3632.2 838.25 L3640.2 846.75" fill="none" stroke="#e6e6e6" stroke-width="2.6"/>
<path d="M3624.2 862.25 L3632.2 870.75 L3640.2 862.25" fill="none" stroke="#e6e6e6" stroke-width="2.6"/>
<path d="M3750.5 850.5 L3759.5 859.5 L3768.5 850.5" fill="none" stroke="#ececec" stroke-width="2.8"/>
<defs><pattern id="ock" x="3404" y="909.2" width="12.2" height="12.2" patternUnits="userSpaceOnUse"><rect width="12.2" height="12.2" fill="#7a7a7a"/><rect width="6.1" height="6.1" fill="#5c5c5c"/><rect x="6.1" y="6.1" width="6.1" height="6.1" fill="#5c5c5c"/></pattern></defs>
<rect x="3404" y="909.2" width="39.2" height="36.3" fill="url(#ock)" stroke="#c4c4c4" stroke-width="2.4"/>
<path d="M3755.5 917.6 L3764.5 926.6 L3755.5 935.6" fill="none" stroke="#ececec" stroke-width="2.8"/>
<path d="M3447 1021.5 L3454 1021.5 L3450.5 1025.5 Z" fill="#cfcfcf"/>
<circle cx="3923.3" cy="1070.9" r="4.3" fill="#c8c8c8"/>
<circle cx="3936.3" cy="1070.9" r="4.3" fill="#c8c8c8"/>
<circle cx="3949.3" cy="1070.9" r="4.3" fill="#c8c8c8"/>
<path d="M3417.5 1204.5 L3438.21 1204.5 L3447.39 1213.68 L3447.39 1233.06 L3417.5 1233.06 Z" fill="#6c6c6c" stroke="#c6c6c6" stroke-width="2.6"/>
<path d="M3438.21 1204.5 L3438.21 1213.68 L3447.39 1213.68" fill="none" stroke="#c6c6c6" stroke-width="2"/>
<line x1="3417.5" y1="1195.32" x2="3417.5" y2="1203.5" stroke="#c6c6c6" stroke-width="2.4"/>
<line x1="3408.83" y1="1204.5" x2="3416.5" y2="1204.5" stroke="#c6c6c6" stroke-width="2.4"/>
<path d="M3452.5 1214.5 L3461.5 1223.5 L3470.5 1214.5" fill="none" stroke="#c6c6c6" stroke-width="2.4"/>
<rect x="3504" y="1193" width="2.6" height="46" fill="#c6c6c6"/>
<rect x="3508.6" y="1198.5" width="20.9" height="14" fill="#c6c6c6"/>
<rect x="3508.6" y="1219" width="33.4" height="12.5" fill="#c6c6c6"/>
<rect x="3596" y="1193" width="2.6" height="46" fill="#c6c6c6"/>
<rect x="3585.5" y="1198.5" width="23.5" height="14" fill="#c6c6c6"/>
<rect x="3581" y="1219" width="32.5" height="12.5" fill="#c6c6c6"/>
<rect x="3692.5" y="1193" width="2.6" height="46" fill="#c6c6c6"/>
<rect x="3669.5" y="1198.5" width="21" height="14" fill="#c6c6c6"/>
<rect x="3656.5" y="1219" width="34" height="12.5" fill="#c6c6c6"/>
<rect x="3726" y="1195.5" width="45.5" height="2.6" fill="#c6c6c6"/>
<rect x="3733.5" y="1201" width="12.5" height="32.5" fill="#c6c6c6"/>
<rect x="3752" y="1201" width="15" height="19.5" fill="#c6c6c6"/>
<rect x="3801" y="1213.7" width="46" height="2.6" fill="#c6c6c6"/>
<rect x="3808.5" y="1198" width="12.5" height="33.5" fill="#c6c6c6"/>
<rect x="3826.5" y="1203" width="15" height="23.5" fill="#c6c6c6"/>
<rect x="3876" y="1233.3" width="45.5" height="2.6" fill="#c6c6c6"/>
<rect x="3883.5" y="1198" width="12.5" height="33" fill="#c6c6c6"/>
<rect x="3902" y="1211" width="15" height="20" fill="#c6c6c6"/>
<circle cx="3923.3" cy="1280.9" r="4.3" fill="#c8c8c8"/>
<circle cx="3936.3" cy="1280.9" r="4.3" fill="#c8c8c8"/>
<circle cx="3949.3" cy="1280.9" r="4.3" fill="#c8c8c8"/>
<path d="M3933.8 1660.75 L3942.3 1669.25 L3950.8 1660.75" fill="none" stroke="#ececec" stroke-width="2.6"/>
<path d="M2664.55 236.1 L2670.3 229.5 L2676.05 236.1" fill="none" stroke="#9c9c9c" stroke-width="1.7"/>
<path d="M2664.55 241.5 L2670.3 248.1 L2676.05 241.5" fill="none" stroke="#9c9c9c" stroke-width="1.7"/>
<path d="M3171.1 233.4 L3179.5 241.2 L3171.1 249" fill="none" stroke="#d0d0d0" stroke-width="2"/>
<path d="M3183.7 233.4 L3192.1 241.2 L3183.7 249" fill="none" stroke="#d0d0d0" stroke-width="2"/>
<line x1="3212.8" y1="228" x2="3212.8" y2="254.5" stroke="#c0c0c0" stroke-width="2"/>
<line x1="3231.6" y1="233.4" x2="3256.5" y2="233.4" stroke="#c8c8c8" stroke-width="2.2"/>
<line x1="3231.6" y1="241.4" x2="3256.5" y2="241.4" stroke="#c8c8c8" stroke-width="2.2"/>
<line x1="3231.6" y1="249.2" x2="3256.5" y2="249.2" stroke="#c8c8c8" stroke-width="2.2"/>
<clipPath id="cpn"><rect x="2666.3" y="299.8" width="30.5" height="30.5"/></clipPath>
<line x1="2666.3" y1="330.3" x2="2696.8" y2="299.8" stroke="#e8291c" stroke-width="4" clip-path="url(#cpn)"/>
<line x1="2937.5" y1="441" x2="2937.5" y2="449.8" stroke="#383838" stroke-width="2.6"/>
<line x1="2942.56" y1="441" x2="2942.56" y2="449.8" stroke="#383838" stroke-width="2.6"/>
<line x1="2947.61" y1="441" x2="2947.61" y2="449.8" stroke="#383838" stroke-width="2.6"/>
<line x1="2952.67" y1="441" x2="2952.67" y2="449.8" stroke="#383838" stroke-width="2.6"/>
<line x1="2957.72" y1="441" x2="2957.72" y2="449.8" stroke="#383838" stroke-width="2.6"/>
<line x1="2962.78" y1="441" x2="2962.78" y2="449.8" stroke="#383838" stroke-width="2.6"/>
<line x1="2967.83" y1="441" x2="2967.83" y2="449.8" stroke="#383838" stroke-width="2.6"/>
<line x1="2972.89" y1="441" x2="2972.89" y2="449.8" stroke="#383838" stroke-width="2.6"/>
<line x1="2977.94" y1="441" x2="2977.94" y2="449.8" stroke="#383838" stroke-width="2.6"/>
<line x1="2983" y1="441" x2="2983" y2="449.8" stroke="#383838" stroke-width="2.6"/>
<line x1="2960" y1="1285" x2="2960" y2="1294.5" stroke="#383838" stroke-width="2.6"/>
<line x1="2965.11" y1="1285" x2="2965.11" y2="1294.5" stroke="#383838" stroke-width="2.6"/>
<line x1="2970.22" y1="1285" x2="2970.22" y2="1294.5" stroke="#383838" stroke-width="2.6"/>
<line x1="2975.33" y1="1285" x2="2975.33" y2="1294.5" stroke="#383838" stroke-width="2.6"/>
<line x1="2980.44" y1="1285" x2="2980.44" y2="1294.5" stroke="#383838" stroke-width="2.6"/>
<line x1="2985.56" y1="1285" x2="2985.56" y2="1294.5" stroke="#383838" stroke-width="2.6"/>
<line x1="2990.67" y1="1285" x2="2990.67" y2="1294.5" stroke="#383838" stroke-width="2.6"/>
<line x1="2995.78" y1="1285" x2="2995.78" y2="1294.5" stroke="#383838" stroke-width="2.6"/>
<line x1="3000.89" y1="1285" x2="3000.89" y2="1294.5" stroke="#383838" stroke-width="2.6"/>
<line x1="3006" y1="1285" x2="3006" y2="1294.5" stroke="#383838" stroke-width="2.6"/>
<line x1="2697.3" y1="675.6" x2="2710.8" y2="689.2" stroke="#c6c6c6" stroke-width="2.6"/>
<line x1="2710.8" y1="675.6" x2="2697.3" y2="689.2" stroke="#c6c6c6" stroke-width="2.6"/>
<path d="M3256.7 675.8 L3249.9 681.7 L3256.7 687.6" fill="none" stroke="#d0d0d0" stroke-width="2"/>
<path d="M3266.2 675.8 L3259.4 681.7 L3266.2 687.6" fill="none" stroke="#d0d0d0" stroke-width="2"/>
<line x1="3243.9" y1="723.7" x2="3269.2" y2="723.7" stroke="#c8c8c8" stroke-width="2.2"/>
<line x1="3243.9" y1="731.3" x2="3269.2" y2="731.3" stroke="#c8c8c8" stroke-width="2.2"/>
<line x1="3243.9" y1="738.9" x2="3269.2" y2="738.9" stroke="#c8c8c8" stroke-width="2.2"/>
<rect x="3164.2" y="792.9" width="30" height="4.2" fill="#c6c6c6"/>
<rect x="3164.2" y="802.8" width="30" height="4.2" fill="#c6c6c6"/>
<rect x="3164.2" y="812.9" width="30" height="4.2" fill="#c6c6c6"/>
<rect x="3164.2" y="823.1" width="30" height="4.2" fill="#c6c6c6"/>
<rect x="3224.3" y="792.8" width="9.8" height="9.8" fill="#ffffff"/>
<rect x="3224.3" y="805.3" width="9.8" height="9.8" fill="#ffffff"/>
<rect x="3224.3" y="817.6" width="9.8" height="9.8" fill="#ffffff"/>
<rect x="3236.7" y="792.8" width="9.8" height="9.8" fill="#ffffff"/>
<rect x="3236.7" y="805.3" width="9.8" height="9.8" fill="#ffffff"/>
<rect x="3236.7" y="817.6" width="9.8" height="9.8" fill="#ffffff"/>
<rect x="3249.2" y="792.8" width="9.8" height="9.8" fill="#ffffff"/>
<rect x="3249.2" y="805.3" width="9.8" height="9.8" fill="#ffffff"/>
<rect x="3249.2" y="817.6" width="9.8" height="9.8" fill="#ffffff"/>
<path d="M3243.7 887.4 L3252.2 879.4 L3260.7 887.4" fill="none" stroke="#5e5e5e" stroke-width="2.2"/>
<path d="M3243.7 1209.8 L3252.2 1217.8 L3260.7 1209.8" fill="none" stroke="#5e5e5e" stroke-width="2.2"/>
<defs><linearGradient id="sgbw" x1="0" x2="1"><stop offset="0" stop-color="#fff"/><stop offset="1" stop-color="#000"/></linearGradient><linearGradient id="sgor" x1="0" x2="1"><stop offset="0" stop-color="#f08a2c"/><stop offset="0.55" stop-color="#eda437"/><stop offset="1" stop-color="#e3d048"/></linearGradient><linearGradient id="sgfd" x1="0" x2="1"><stop offset="0" stop-color="#5fd6e6"/><stop offset="1" stop-color="#5fd6e6" stop-opacity="0"/></linearGradient><pattern id="chk" width="8" height="8" patternUnits="userSpaceOnUse"><rect width="8" height="8" fill="#fff"/><rect width="4" height="4" fill="#cfcfcf"/><rect x="4" y="4" width="4" height="4" fill="#cfcfcf"/></pattern></defs>
<rect x="2697.7" y="868.8" width="34.9" height="34.9" fill="#47464b"/>
<rect x="2698.8" y="869.9" width="32.7" height="32.7" fill="#fff"/>
<line x1="2702.3" y1="899.1" x2="2728" y2="873.4" stroke="#e8291c" stroke-width="4.2" stroke-linecap="round"/>
<rect x="2732.7" y="868.8" width="34.9" height="34.9" fill="#47464b"/>
<rect x="2733.8" y="869.9" width="32.7" height="32.7" fill="#f0f0f0"/>
<circle cx="2750.15" cy="886.25" r="11.8" fill="none" stroke="#8a8a8a" stroke-width="1.2"/>
<line x1="2750.15" y1="869.9" x2="2750.15" y2="902.6" stroke="#333" stroke-width="2"/>
<line x1="2733.8" y1="886.25" x2="2766.5" y2="886.25" stroke="#333" stroke-width="2"/>
<circle cx="2750.15" cy="886.25" r="4.6" fill="#f4f4f4" stroke="#333" stroke-width="1.8"/>
<circle cx="2750.15" cy="886.25" r="1.3" fill="#333"/>
<rect x="2767.7" y="868.8" width="34.9" height="34.9" fill="#47464b"/>
<rect x="2768.8" y="869.9" width="32.7" height="32.7" fill="#ffffff"/>
<rect x="2802.7" y="868.8" width="34.9" height="34.9" fill="#47464b"/>
<rect x="2803.8" y="869.9" width="32.7" height="32.7" fill="#fff"/>
<rect x="2806.2" y="872.3" width="27.9" height="27.9" fill="#000"/>
<rect x="2837.7" y="868.8" width="34.9" height="34.9" fill="#47464b"/>
<rect x="2838.8" y="869.9" width="32.7" height="32.7" fill="#eb3223"/>
<rect x="2872.7" y="868.8" width="34.9" height="34.9" fill="#47464b"/>
<rect x="2873.8" y="869.9" width="32.7" height="32.7" fill="#fffe54"/>
<rect x="2907.7" y="868.8" width="34.9" height="34.9" fill="#47464b"/>
<rect x="2908.8" y="869.9" width="32.7" height="32.7" fill="#75fb4c"/>
<rect x="2942.7" y="868.8" width="34.9" height="34.9" fill="#47464b"/>
<rect x="2943.8" y="869.9" width="32.7" height="32.7" fill="#73fbfd"/>
<rect x="2977.7" y="868.8" width="34.9" height="34.9" fill="#47464b"/>
<rect x="2978.8" y="869.9" width="32.7" height="32.7" fill="#0000f5"/>
<rect x="3012.7" y="868.8" width="34.9" height="34.9" fill="#47464b"/>
<rect x="3013.8" y="869.9" width="32.7" height="32.7" fill="#ea33f7"/>
<rect x="3047.7" y="868.8" width="34.9" height="34.9" fill="#47464b"/>
<rect x="3048.8" y="869.9" width="32.7" height="32.7" fill="#b4353a"/>
<rect x="3082.7" y="868.8" width="34.9" height="34.9" fill="#47464b"/>
<rect x="3083.8" y="869.9" width="32.7" height="32.7" fill="#da3832"/>
<rect x="3117.7" y="868.8" width="34.9" height="34.9" fill="#47464b"/>
<rect x="3118.8" y="869.9" width="32.7" height="32.7" fill="#e26a38"/>
<rect x="3152.7" y="868.8" width="34.9" height="34.9" fill="#47464b"/>
<rect x="3153.8" y="869.9" width="32.7" height="32.7" fill="#eb9b3e"/>
<rect x="3187.7" y="868.8" width="34.9" height="34.9" fill="#47464b"/>
<rect x="3188.8" y="869.9" width="32.7" height="32.7" fill="#f2b754"/>
<rect x="2697.7" y="903.4" width="34.9" height="34.9" fill="#47464b"/>
<rect x="2698.8" y="904.5" width="32.7" height="32.7" fill="#faec50"/>
<rect x="2732.7" y="903.4" width="34.9" height="34.9" fill="#47464b"/>
<rect x="2733.8" y="904.5" width="32.7" height="32.7" fill="#dce14f"/>
<rect x="2767.7" y="903.4" width="34.9" height="34.9" fill="#47464b"/>
<rect x="2768.8" y="904.5" width="32.7" height="32.7" fill="#97c75a"/>
<rect x="2802.7" y="903.4" width="34.9" height="34.9" fill="#47464b"/>
<rect x="2803.8" y="904.5" width="32.7" height="32.7" fill="#5cb55c"/>
<rect x="2837.7" y="903.4" width="34.9" height="34.9" fill="#47464b"/>
<rect x="2838.8" y="904.5" width="32.7" height="32.7" fill="#3b914e"/>
<rect x="2872.7" y="903.4" width="34.9" height="34.9" fill="#47464b"/>
<rect x="2873.8" y="904.5" width="32.7" height="32.7" fill="#2a683c"/>
<rect x="2907.7" y="903.4" width="34.9" height="34.9" fill="#47464b"/>
<rect x="2908.8" y="904.5" width="32.7" height="32.7" fill="#55b47a"/>
<rect x="2942.7" y="903.4" width="34.9" height="34.9" fill="#47464b"/>
<rect x="2943.8" y="904.5" width="32.7" height="32.7" fill="#48a89e"/>
<rect x="2977.7" y="903.4" width="34.9" height="34.9" fill="#47464b"/>
<rect x="2978.8" y="904.5" width="32.7" height="32.7" fill="#55abe0"/>
<rect x="3012.7" y="903.4" width="34.9" height="34.9" fill="#47464b"/>
<rect x="3013.8" y="904.5" width="32.7" height="32.7" fill="#2f71b9"/>
<rect x="3047.7" y="903.4" width="34.9" height="34.9" fill="#47464b"/>
<rect x="3048.8" y="904.5" width="32.7" height="32.7" fill="#2f318f"/>
<rect x="3082.7" y="903.4" width="34.9" height="34.9" fill="#47464b"/>
<rect x="3083.8" y="904.5" width="32.7" height="32.7" fill="#1b1464"/>
<rect x="3117.7" y="903.4" width="34.9" height="34.9" fill="#47464b"/>
<rect x="3118.8" y="904.5" width="32.7" height="32.7" fill="#642f90"/>
<rect x="3152.7" y="903.4" width="34.9" height="34.9" fill="#47464b"/>
<rect x="3153.8" y="904.5" width="32.7" height="32.7" fill="#8e2f8d"/>
<rect x="3187.7" y="903.4" width="34.9" height="34.9" fill="#47464b"/>
<rect x="3188.8" y="904.5" width="32.7" height="32.7" fill="#97195c"/>
<rect x="2697.7" y="938.2" width="34.9" height="34.9" fill="#47464b"/>
<rect x="2698.8" y="939.3" width="32.7" height="32.7" fill="#c72b5c"/>
<rect x="2732.7" y="938.2" width="34.9" height="34.9" fill="#47464b"/>
<rect x="2733.8" y="939.3" width="32.7" height="32.7" fill="#de397c"/>
<rect x="2767.7" y="938.2" width="34.9" height="34.9" fill="#47464b"/>
<rect x="2768.8" y="939.3" width="32.7" height="32.7" fill="#c6b29a"/>
<rect x="2802.7" y="938.2" width="34.9" height="34.9" fill="#47464b"/>
<rect x="2803.8" y="939.3" width="32.7" height="32.7" fill="#988676"/>
<rect x="2837.7" y="938.2" width="34.9" height="34.9" fill="#47464b"/>
<rect x="2838.8" y="939.3" width="32.7" height="32.7" fill="#726358"/>
<rect x="2872.7" y="938.2" width="34.9" height="34.9" fill="#47464b"/>
<rect x="2873.8" y="939.3" width="32.7" height="32.7" fill="#534742"/>
<rect x="2907.7" y="938.2" width="34.9" height="34.9" fill="#47464b"/>
<rect x="2908.8" y="939.3" width="32.7" height="32.7" fill="#c39d70"/>
<rect x="2942.7" y="938.2" width="34.9" height="34.9" fill="#47464b"/>
<rect x="2943.8" y="939.3" width="32.7" height="32.7" fill="#a37d56"/>
<rect x="2977.7" y="938.2" width="34.9" height="34.9" fill="#47464b"/>
<rect x="2978.8" y="939.3" width="32.7" height="32.7" fill="#89643e"/>
<rect x="3012.7" y="938.2" width="34.9" height="34.9" fill="#47464b"/>
<rect x="3013.8" y="939.3" width="32.7" height="32.7" fill="#724d2a"/>
<rect x="3047.7" y="938.2" width="34.9" height="34.9" fill="#47464b"/>
<rect x="3048.8" y="939.3" width="32.7" height="32.7" fill="#5d3a1b"/>
<rect x="3082.7" y="938.2" width="34.9" height="34.9" fill="#47464b"/>
<rect x="3083.8" y="939.3" width="32.7" height="32.7" fill="#402311"/>
<rect x="3117.7" y="938.2" width="34.9" height="34.9" fill="#47464b"/>
<rect x="3118.8" y="939.3" width="32.7" height="32.7" fill="url(#sgbw)"/>
<rect x="3152.7" y="938.2" width="34.9" height="34.9" fill="#47464b"/>
<rect x="3153.8" y="939.3" width="32.7" height="32.7" fill="url(#sgor)"/>
<rect x="3187.7" y="938.2" width="34.9" height="34.9" fill="#47464b"/>
<rect x="3188.8" y="939.3" width="32.7" height="32.7" fill="url(#chk)"/>
<rect x="3188.8" y="939.3" width="32.7" height="32.7" fill="url(#sgfd)"/>
<rect x="2698.8" y="974.6" width="32.7" height="32.7" fill="#2b5aa5"/>
<clipPath id="pcp"><rect x="2698.8" y="974.6" width="32.7" height="32.7"/></clipPath>
<path d="M2708.99 981.64 A2.51 2.51 0 1 1 2708.22 977.14" fill="none" stroke="#e6eefa" stroke-width="1.3" opacity="0.9" clip-path="url(#pcp)"/>
<path d="M2703.57 992.22 A2.21 2.21 0 1 1 2699.82 990.79" fill="none" stroke="#e6eefa" stroke-width="1.3" opacity="0.9" clip-path="url(#pcp)"/>
<path d="M2708.19 993.93 A2.17 2.17 0 1 1 2707.96 989.98" fill="none" stroke="#e6eefa" stroke-width="1.3" opacity="0.9" clip-path="url(#pcp)"/>
<path d="M2707.38 1002.53 A1.47 1.47 0 1 1 2708.06 1005.11" fill="none" stroke="#e6eefa" stroke-width="1.8" opacity="0.9" clip-path="url(#pcp)"/>
<path d="M2722.19 980.53 A2.27 2.27 0 1 1 2723.58 984.41" fill="none" stroke="#e6eefa" stroke-width="2.4" opacity="0.9" clip-path="url(#pcp)"/>
<path d="M2729.74 998.93 A2.44 2.44 0 1 1 2725.95 1001.24" fill="none" stroke="#e6eefa" stroke-width="1.8" opacity="0.9" clip-path="url(#pcp)"/>
<path d="M2718.21 991.44 A1.9 1.9 0 1 1 2721.54 992.33" fill="none" stroke="#e6eefa" stroke-width="1.3" opacity="0.9" clip-path="url(#pcp)"/>
<path d="M2730.07 996.66 A4.04 4.04 0 1 1 2723.91 1000.66" fill="none" stroke="#e6eefa" stroke-width="1.3" opacity="0.9" clip-path="url(#pcp)"/>
<path d="M2729.11 989.86 A3.87 3.87 0 1 1 2723.03 993.41" fill="none" stroke="#e6eefa" stroke-width="2.4" opacity="0.9" clip-path="url(#pcp)"/>
<path d="M2704.3 989.43 A2.21 2.21 0 1 1 2708.28 989.92" fill="none" stroke="#e6eefa" stroke-width="1.3" opacity="0.9" clip-path="url(#pcp)"/>
<path d="M2711.01 1000.36 A1.52 1.52 0 1 1 2708.93 998.53" fill="none" stroke="#e6eefa" stroke-width="2.4" opacity="0.9" clip-path="url(#pcp)"/>
<path d="M2728.44 988.43 A3.21 3.21 0 1 1 2727.75 994.24" fill="none" stroke="#e6eefa" stroke-width="1.3" opacity="0.9" clip-path="url(#pcp)"/>
<path d="M2730.17 984.66 A2.56 2.56 0 1 1 2730.78 980.05" fill="none" stroke="#e6eefa" stroke-width="2.4" opacity="0.9" clip-path="url(#pcp)"/>
<path d="M2711.24 980.49 A2.62 2.62 0 1 1 2713.87 984.46" fill="none" stroke="#e6eefa" stroke-width="2.4" opacity="0.9" clip-path="url(#pcp)"/>
<path d="M2718.39 1003.19 A1.68 1.68 0 1 1 2716.29 1000.96" fill="none" stroke="#e6eefa" stroke-width="1.3" opacity="0.9" clip-path="url(#pcp)"/>
<path d="M2711.51 995.96 A3.81 3.81 0 1 1 2708.97 989.5" fill="none" stroke="#e6eefa" stroke-width="1.3" opacity="0.9" clip-path="url(#pcp)"/>
<path d="M2711.23 978.53 A2.4 2.4 0 1 1 2708.69 974.98" fill="none" stroke="#e6eefa" stroke-width="1.8" opacity="0.9" clip-path="url(#pcp)"/>
<path d="M2721.54 1005.56 A1.45 1.45 0 1 1 2723.19 1003.49" fill="none" stroke="#e6eefa" stroke-width="1.3" opacity="0.9" clip-path="url(#pcp)"/>
<path d="M2720.11 985.61 A4.04 4.04 0 1 1 2722.88 992.42" fill="none" stroke="#e6eefa" stroke-width="1.3" opacity="0.9" clip-path="url(#pcp)"/>
<path d="M2710.95 984.09 A2.64 2.64 0 1 1 2709.6 979.48" fill="none" stroke="#e6eefa" stroke-width="1.8" opacity="0.9" clip-path="url(#pcp)"/>
<path d="M2716.03 983.44 A3 3 0 1 1 2720.99 981.16" fill="none" stroke="#e6eefa" stroke-width="1.8" opacity="0.9" clip-path="url(#pcp)"/>
<path d="M2705.06 1001.43 A2.42 2.42 0 1 1 2707.83 998.02" fill="none" stroke="#e6eefa" stroke-width="1.3" opacity="0.9" clip-path="url(#pcp)"/>
<path d="M2716.41 985.14 A3.97 3.97 0 1 1 2713.41 978.58" fill="none" stroke="#e6eefa" stroke-width="1.3" opacity="0.9" clip-path="url(#pcp)"/>
<path d="M2704.33 984.1 A3.3 3.3 0 1 1 2703.13 978.23" fill="none" stroke="#e6eefa" stroke-width="1.3" opacity="0.9" clip-path="url(#pcp)"/>
<path d="M2718.72 993.83 A2.3 2.3 0 1 1 2715.4 991.29" fill="none" stroke="#e6eefa" stroke-width="2.4" opacity="0.9" clip-path="url(#pcp)"/>
<path d="M2710.2 1008.28 A3.22 3.22 0 1 1 2710.88 1002.45" fill="none" stroke="#e6eefa" stroke-width="1.3" opacity="0.9" clip-path="url(#pcp)"/>
<path d="M2706.42 989.1 A1.5 1.5 0 1 1 2709.15 988.92" fill="none" stroke="#e6eefa" stroke-width="1.3" opacity="0.9" clip-path="url(#pcp)"/>
<path d="M2720.15 990.73 A2 2 0 1 1 2720.28 987.09" fill="none" stroke="#e6eefa" stroke-width="1.3" opacity="0.9" clip-path="url(#pcp)"/>
<path d="M2708.33 985.53 A1.98 1.98 0 1 1 2709.44 982.09" fill="none" stroke="#e6eefa" stroke-width="1.8" opacity="0.9" clip-path="url(#pcp)"/>
<path d="M2701.2 976.48 A4 4 0 1 1 2706.06 981.89" fill="none" stroke="#e6eefa" stroke-width="2.4" opacity="0.9" clip-path="url(#pcp)"/>
<path d="M2713.18 999.33 A3.23 3.23 0 1 1 2709.47 1003.89" fill="none" stroke="#e6eefa" stroke-width="2.4" opacity="0.9" clip-path="url(#pcp)"/>
<path d="M2704.32 986.6 A2.6 2.6 0 1 1 2699.58 986.67" fill="none" stroke="#e6eefa" stroke-width="2.4" opacity="0.9" clip-path="url(#pcp)"/>
<path d="M2725.33 1001.19 A2.34 2.34 0 1 1 2726 1005.39" fill="none" stroke="#e6eefa" stroke-width="2.4" opacity="0.9" clip-path="url(#pcp)"/>
<path d="M2710.47 986.75 A2 2 0 1 1 2707.99 989.42" fill="none" stroke="#e6eefa" stroke-width="1.8" opacity="0.9" clip-path="url(#pcp)"/>
<path d="M2712.27 985.69 A2.79 2.79 0 1 1 2707.73 987.95" fill="none" stroke="#e6eefa" stroke-width="1.8" opacity="0.9" clip-path="url(#pcp)"/>
<path d="M2729.63 994.87 A1.52 1.52 0 1 1 2726.92 995.45" fill="none" stroke="#e6eefa" stroke-width="1.3" opacity="0.9" clip-path="url(#pcp)"/>
<path d="M2701.6 1021.5 L2712.6 1021.5 L2716.6 1027 L2729.1 1027 L2729.1 1042.5 L2701.6 1042.5 Z" fill="#d0d0d0"/>
<path d="M2704 1024.1 L2711.4 1024.1 L2714.1 1027.9 L2704 1027.9 Z" fill="#6a6a6a"/>
<rect x="2732.7" y="1013.9" width="34.9" height="34.9" fill="#47464b"/>
<rect x="2733.8" y="1015" width="32.7" height="32.7" fill="#7bc7cd"/>
<rect x="2767.7" y="1013.9" width="34.9" height="34.9" fill="#47464b"/>
<rect x="2768.8" y="1015" width="32.7" height="32.7" fill="#8589c4"/>
<rect x="2802.7" y="1013.9" width="34.9" height="34.9" fill="#47464b"/>
<rect x="2803.8" y="1015" width="32.7" height="32.7" fill="#c1a2d4"/>
<path d="M2701.6 1060.9 L2712.6 1060.9 L2716.6 1066.4 L2729.1 1066.4 L2729.1 1081.9 L2701.6 1081.9 Z" fill="#d0d0d0"/>
<path d="M2704 1063.5 L2711.4 1063.5 L2714.1 1067.3 L2704 1067.3 Z" fill="#6a6a6a"/>
<rect x="2732.7" y="1053.3" width="34.9" height="34.9" fill="#47464b"/>
<rect x="2733.8" y="1054.4" width="32.7" height="32.7" fill="#000000"/>
<rect x="2767.7" y="1053.3" width="34.9" height="34.9" fill="#47464b"/>
<rect x="2768.8" y="1054.4" width="32.7" height="32.7" fill="#1a1a1a"/>
<rect x="2802.7" y="1053.3" width="34.9" height="34.9" fill="#47464b"/>
<rect x="2803.8" y="1054.4" width="32.7" height="32.7" fill="#333333"/>
<rect x="2837.7" y="1053.3" width="34.9" height="34.9" fill="#47464b"/>
<rect x="2838.8" y="1054.4" width="32.7" height="32.7" fill="#4d4d4d"/>
<rect x="2872.7" y="1053.3" width="34.9" height="34.9" fill="#47464b"/>
<rect x="2873.8" y="1054.4" width="32.7" height="32.7" fill="#666666"/>
<rect x="2907.7" y="1053.3" width="34.9" height="34.9" fill="#47464b"/>
<rect x="2908.8" y="1054.4" width="32.7" height="32.7" fill="#808080"/>
<rect x="2942.7" y="1053.3" width="34.9" height="34.9" fill="#47464b"/>
<rect x="2943.8" y="1054.4" width="32.7" height="32.7" fill="#999999"/>
<rect x="2977.7" y="1053.3" width="34.9" height="34.9" fill="#47464b"/>
<rect x="2978.8" y="1054.4" width="32.7" height="32.7" fill="#b3b3b3"/>
<rect x="3012.7" y="1053.3" width="34.9" height="34.9" fill="#47464b"/>
<rect x="3013.8" y="1054.4" width="32.7" height="32.7" fill="#cccccc"/>
<rect x="3047.7" y="1053.3" width="34.9" height="34.9" fill="#47464b"/>
<rect x="3048.8" y="1054.4" width="32.7" height="32.7" fill="#e6e6e6"/>
<rect x="3082.7" y="1053.3" width="34.9" height="34.9" fill="#47464b"/>
<rect x="3083.8" y="1054.4" width="32.7" height="32.7" fill="#f2f2f2"/>
<rect x="2711" y="1243" width="4.6" height="24" fill="#c6c6c6"/>
<rect x="2718.8" y="1243" width="6.4" height="24" fill="#c6c6c6"/>
<rect x="2720.6" y="1246" width="2.8" height="4.5" fill="#6a6a6a"/>
<path d="M2727.2 1244.2 L2731.5 1243 L2738.4 1266 L2734 1267.3 Z" fill="#c6c6c6"/>
<path d="M2741.5 1264.5 L2749 1264.5 L2745.2 1269 Z" fill="#c6c6c6"/>
<rect x="2780.6" y="1240.4" width="20.4" height="19.6" fill="none" stroke="#c6c6c6" stroke-width="2.4"/>
<rect x="2788.2" y="1248.2" width="19.4" height="20" fill="#535353" stroke="#c6c6c6" stroke-width="2.4"/>
<path d="M2797 1248.5 L2803.5 1248.5 L2803.5 1256.2 L2800.2 1253.4 L2797 1256.2 Z" fill="#c6c6c6"/>
<rect x="2784" y="1259" width="8" height="4.5" fill="#535353"/>
<line x1="2777" y1="1261.3" x2="2789" y2="1261.3" stroke="#c6c6c6" stroke-width="2.6"/>
<path d="M2787 1254.5 L2794.3 1261.3 L2787 1268.2 Z" fill="#c6c6c6"/>
<rect x="2923.9" y="1242.5" width="25.3" height="24.5" fill="#c6c6c6"/>
<rect x="2927" y="1245.5" width="4.6" height="4.6" fill="#6a6a6a"/>
<rect x="2935" y="1245.5" width="4.6" height="4.6" fill="#6a6a6a"/>
<rect x="2943" y="1245.5" width="4.6" height="4.6" fill="#6a6a6a"/>
<rect x="2927" y="1253" width="4.6" height="4.6" fill="#6a6a6a"/>
<rect x="2935" y="1253" width="4.6" height="4.6" fill="#6a6a6a"/>
<rect x="2935" y="1260.5" width="4.6" height="4.6" fill="#6a6a6a"/>
<rect x="2943" y="1260.5" width="4.6" height="4.6" fill="#6a6a6a"/>
<path d="M2954 1264.5 L2961.5 1264.5 L2957.7 1269 Z" fill="#c6c6c6"/>
<rect x="2992.9" y="1244.2" width="24.7" height="23.6" fill="none" stroke="#c6c6c6" stroke-width="2.4"/>
<rect x="2992.9" y="1244.2" width="24.7" height="4.8" fill="#c6c6c6"/>
<rect x="2997" y="1253" width="2.5" height="2" fill="#c6c6c6"/>
<rect x="3001.5" y="1253" width="12" height="2" fill="#c6c6c6"/>
<rect x="2997" y="1257.8" width="2.5" height="2" fill="#c6c6c6"/>
<rect x="3001.5" y="1257.8" width="12" height="2" fill="#c6c6c6"/>
<rect x="2997" y="1262.5" width="2.5" height="2" fill="#c6c6c6"/>
<rect x="3001.5" y="1262.5" width="12" height="2" fill="#c6c6c6"/>
<path d="M3053.9 1243.5 L3066 1243.5 L3070 1248.8 L3087.1 1248.8 L3087.1 1267 L3053.9 1267 Z" fill="#c6c6c6"/>
<path d="M3056.3 1246 L3064.6 1246 L3067.3 1249.6 L3056.3 1249.6 Z" fill="#6a6a6a"/>
<rect x="3125.5" y="1244.2" width="24.5" height="23.6" fill="none" stroke="#c6c6c6" stroke-width="2.4"/>
<line x1="3137.8" y1="1249.5" x2="3137.8" y2="1262.5" stroke="#c6c6c6" stroke-width="2.4"/>
<line x1="3131.3" y1="1256" x2="3144.3" y2="1256" stroke="#c6c6c6" stroke-width="2.4"/>
<path d="M3189.5 1247.5 L3211 1247.5 L3209 1268.5 L3191.5 1268.5 Z" fill="none" stroke="#c6c6c6" stroke-width="2.2"/>
<line x1="3186.5" y1="1246.7" x2="3214" y2="1246.7" stroke="#c6c6c6" stroke-width="2.4"/>
<path d="M3195.5 1246 L3195.5 1241 L3205 1241 L3205 1246" fill="none" stroke="#c6c6c6" stroke-width="2.2"/>
<line x1="3196" y1="1251.5" x2="3196" y2="1264.5" stroke="#c6c6c6" stroke-width="1.8"/>
<line x1="3200.3" y1="1251.5" x2="3200.3" y2="1264.5" stroke="#c6c6c6" stroke-width="1.8"/>
<line x1="3204.6" y1="1251.5" x2="3204.6" y2="1264.5" stroke="#c6c6c6" stroke-width="1.8"/>
</svg>
</body></html>
